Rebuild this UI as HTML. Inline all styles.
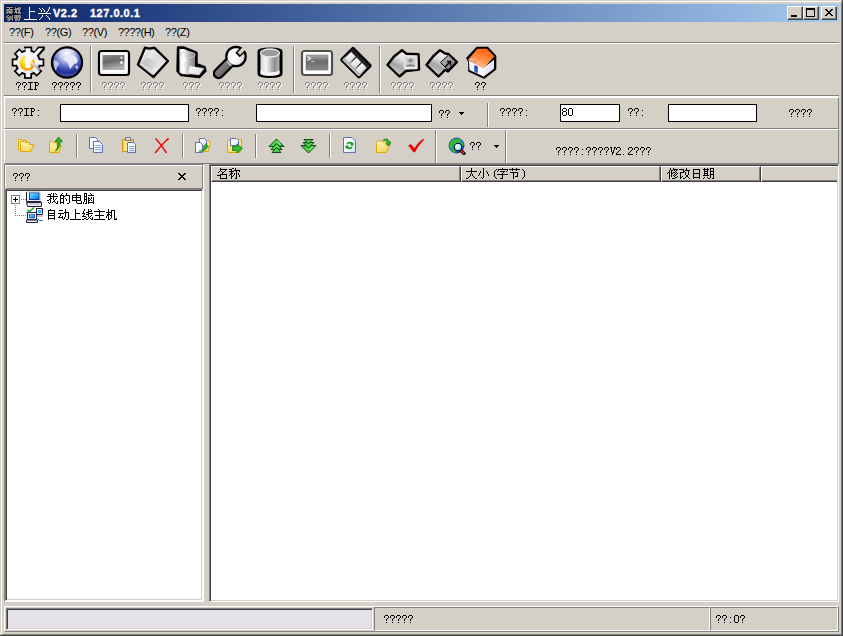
<!DOCTYPE html>
<html><head><meta charset="utf-8">
<style>
*{margin:0;padding:0;box-sizing:border-box}
html,body{width:843px;height:636px;overflow:hidden;background:#d4d0c8;font-family:"Liberation Sans",sans-serif;font-size:11px;color:#000}
.a{position:absolute}
.t{position:absolute;white-space:pre;line-height:1}
.mono{font-family:"Liberation Mono",monospace;font-size:11px;letter-spacing:-0.6px}
.gl{background:#808080}
.wl{background:#fff}
.dl{background:#404040}
.cjk{font-size:12px}
.dis{color:#808080;text-shadow:1px 1px 0 #fff}
</style></head><body>
<!-- window frame -->
<div class="a" style="left:0;top:0;width:843px;height:636px;border-right:1px solid #404040;border-bottom:1px solid #404040"></div>
<div class="a" style="left:1px;top:1px;width:841px;height:634px;border-left:1px solid #fff;border-top:1px solid #fff;border-right:1px solid #808080;border-bottom:1px solid #808080"></div>

<!-- title bar -->
<div class="a" style="left:4px;top:4px;width:835px;height:18px;background:linear-gradient(to right,#0a246a,#a6caf0)"></div>
<svg class="a" style="left:6px;top:5px" width="16" height="16" shape-rendering="crispEdges"><rect x="0" y="1" width="1" height="1" fill="#000" fill-opacity="0.48"/><rect x="1" y="1" width="1" height="1" fill="#000" fill-opacity="0.48"/><rect x="2" y="1" width="1" height="1" fill="#000" fill-opacity="0.78"/><rect x="3" y="1" width="1" height="1" fill="#000" fill-opacity="0.78"/><rect x="4" y="1" width="1" height="1" fill="#000" fill-opacity="0.78"/><rect x="5" y="1" width="1" height="1" fill="#000" fill-opacity="0.48"/><rect x="6" y="1" width="1" height="1" fill="#000" fill-opacity="0.48"/><rect x="8" y="1" width="1" height="1" fill="#000" fill-opacity="0.44"/><rect x="9" y="1" width="1" height="1" fill="#000" fill-opacity="0.44"/><rect x="10" y="1" width="1" height="1" fill="#000" fill-opacity="0.44"/><rect x="11" y="1" width="1" height="1" fill="#000" fill-opacity="0.33"/><rect x="12" y="1" width="1" height="1" fill="#000" fill-opacity="0.45"/><rect x="13" y="1" width="1" height="1" fill="#000" fill-opacity="0.45"/><rect x="14" y="1" width="1" height="1" fill="#000" fill-opacity="0.45"/><rect x="0" y="2" width="1" height="1" fill="rgb(117,117,117)"/><rect x="1" y="2" width="1" height="1" fill="rgb(142,142,142)"/><rect x="2" y="2" width="1" height="1" fill="rgb(142,142,142)"/><rect x="3" y="2" width="1" height="1" fill="rgb(181,181,181)"/><rect x="4" y="2" width="1" height="1" fill="rgb(142,142,142)"/><rect x="5" y="2" width="1" height="1" fill="rgb(142,142,142)"/><rect x="6" y="2" width="1" height="1" fill="rgb(116,116,116)"/><rect x="8" y="2" width="1" height="1" fill="#000" fill-opacity="0.58"/><rect x="9" y="2" width="1" height="1" fill="rgb(137,137,137)"/><rect x="10" y="2" width="1" height="1" fill="#000" fill-opacity="0.58"/><rect x="11" y="2" width="1" height="1" fill="#000" fill-opacity="0.64"/><rect x="12" y="2" width="1" height="1" fill="rgb(122,122,122)"/><rect x="13" y="2" width="1" height="1" fill="rgb(138,138,138)"/><rect x="14" y="2" width="1" height="1" fill="rgb(102,102,102)"/><rect x="15" y="2" width="1" height="1" fill="#000" fill-opacity="0.33"/><rect x="0" y="3" width="1" height="1" fill="#000" fill-opacity="0.65"/><rect x="1" y="3" width="1" height="1" fill="#000" fill-opacity="0.65"/><rect x="2" y="3" width="1" height="1" fill="#000" fill-opacity="0.78"/><rect x="3" y="3" width="1" height="1" fill="rgb(154,154,154)"/><rect x="4" y="3" width="1" height="1" fill="#000" fill-opacity="0.78"/><rect x="5" y="3" width="1" height="1" fill="#000" fill-opacity="0.65"/><rect x="6" y="3" width="1" height="1" fill="#000" fill-opacity="0.65"/><rect x="8" y="3" width="1" height="1" fill="#000" fill-opacity="0.65"/><rect x="9" y="3" width="1" height="1" fill="rgb(155,155,155)"/><rect x="10" y="3" width="1" height="1" fill="rgb(143,143,143)"/><rect x="11" y="3" width="1" height="1" fill="rgb(147,147,147)"/><rect x="12" y="3" width="1" height="1" fill="rgb(163,163,163)"/><rect x="13" y="3" width="1" height="1" fill="rgb(158,158,158)"/><rect x="14" y="3" width="1" height="1" fill="rgb(123,123,123)"/><rect x="15" y="3" width="1" height="1" fill="#000" fill-opacity="0.33"/><rect x="0" y="4" width="1" height="1" fill="rgb(106,106,106)"/><rect x="1" y="4" width="1" height="1" fill="rgb(165,165,165)"/><rect x="2" y="4" width="1" height="1" fill="rgb(159,159,159)"/><rect x="3" y="4" width="1" height="1" fill="rgb(142,142,142)"/><rect x="4" y="4" width="1" height="1" fill="rgb(162,162,162)"/><rect x="5" y="4" width="1" height="1" fill="rgb(165,165,165)"/><rect x="6" y="4" width="1" height="1" fill="rgb(108,108,108)"/><rect x="8" y="4" width="1" height="1" fill="rgb(106,106,106)"/><rect x="9" y="4" width="1" height="1" fill="rgb(164,164,164)"/><rect x="10" y="4" width="1" height="1" fill="rgb(147,147,147)"/><rect x="11" y="4" width="1" height="1" fill="rgb(140,140,140)"/><rect x="12" y="4" width="1" height="1" fill="rgb(132,132,132)"/><rect x="13" y="4" width="1" height="1" fill="rgb(116,116,116)"/><rect x="14" y="4" width="1" height="1" fill="rgb(113,113,113)"/><rect x="15" y="4" width="1" height="1" fill="#000" fill-opacity="0.33"/><rect x="0" y="5" width="1" height="1" fill="rgb(106,106,106)"/><rect x="1" y="5" width="1" height="1" fill="rgb(122,122,122)"/><rect x="2" y="5" width="1" height="1" fill="rgb(138,138,138)"/><rect x="3" y="5" width="1" height="1" fill="#000" fill-opacity="0.72"/><rect x="4" y="5" width="1" height="1" fill="rgb(140,140,140)"/><rect x="5" y="5" width="1" height="1" fill="rgb(122,122,122)"/><rect x="6" y="5" width="1" height="1" fill="rgb(108,108,108)"/><rect x="8" y="5" width="1" height="1" fill="#000" fill-opacity="0.67"/><rect x="9" y="5" width="1" height="1" fill="rgb(142,142,142)"/><rect x="10" y="5" width="1" height="1" fill="rgb(139,139,139)"/><rect x="11" y="5" width="1" height="1" fill="#000" fill-opacity="0.66"/><rect x="12" y="5" width="1" height="1" fill="rgb(148,148,148)"/><rect x="13" y="5" width="1" height="1" fill="rgb(166,166,166)"/><rect x="14" y="5" width="1" height="1" fill="#000" fill-opacity="0.73"/><rect x="0" y="6" width="1" height="1" fill="rgb(106,106,106)"/><rect x="1" y="6" width="1" height="1" fill="rgb(130,130,130)"/><rect x="2" y="6" width="1" height="1" fill="rgb(136,136,136)"/><rect x="3" y="6" width="1" height="1" fill="rgb(173,173,173)"/><rect x="4" y="6" width="1" height="1" fill="rgb(136,136,136)"/><rect x="5" y="6" width="1" height="1" fill="rgb(132,132,132)"/><rect x="6" y="6" width="1" height="1" fill="rgb(108,108,108)"/><rect x="7" y="6" width="1" height="1" fill="#000" fill-opacity="0.44"/><rect x="8" y="6" width="1" height="1" fill="#000" fill-opacity="0.67"/><rect x="9" y="6" width="1" height="1" fill="rgb(167,167,167)"/><rect x="10" y="6" width="1" height="1" fill="rgb(165,165,165)"/><rect x="11" y="6" width="1" height="1" fill="#000" fill-opacity="0.66"/><rect x="12" y="6" width="1" height="1" fill="rgb(124,124,124)"/><rect x="13" y="6" width="1" height="1" fill="rgb(174,174,174)"/><rect x="14" y="6" width="1" height="1" fill="#000" fill-opacity="0.73"/><rect x="15" y="6" width="1" height="1" fill="#000" fill-opacity="0.39"/><rect x="0" y="7" width="1" height="1" fill="rgb(106,106,106)"/><rect x="1" y="7" width="1" height="1" fill="rgb(140,140,140)"/><rect x="2" y="7" width="1" height="1" fill="rgb(138,138,138)"/><rect x="3" y="7" width="1" height="1" fill="rgb(174,174,174)"/><rect x="4" y="7" width="1" height="1" fill="rgb(138,138,138)"/><rect x="5" y="7" width="1" height="1" fill="rgb(140,140,140)"/><rect x="6" y="7" width="1" height="1" fill="rgb(108,108,108)"/><rect x="7" y="7" width="1" height="1" fill="#000" fill-opacity="0.44"/><rect x="8" y="7" width="1" height="1" fill="rgb(137,137,137)"/><rect x="9" y="7" width="1" height="1" fill="rgb(122,122,122)"/><rect x="10" y="7" width="1" height="1" fill="rgb(151,151,151)"/><rect x="11" y="7" width="1" height="1" fill="rgb(125,125,125)"/><rect x="12" y="7" width="1" height="1" fill="rgb(144,144,144)"/><rect x="13" y="7" width="1" height="1" fill="rgb(157,157,157)"/><rect x="14" y="7" width="1" height="1" fill="rgb(130,130,130)"/><rect x="15" y="7" width="1" height="1" fill="#000" fill-opacity="0.43"/><rect x="0" y="8" width="1" height="1" fill="rgb(106,106,106)"/><rect x="1" y="8" width="1" height="1" fill="rgb(122,122,122)"/><rect x="2" y="8" width="1" height="1" fill="#000" fill-opacity="0.73"/><rect x="3" y="8" width="1" height="1" fill="rgb(144,144,144)"/><rect x="4" y="8" width="1" height="1" fill="rgb(102,102,102)"/><rect x="5" y="8" width="1" height="1" fill="rgb(159,159,159)"/><rect x="6" y="8" width="1" height="1" fill="#000" fill-opacity="0.61"/><rect x="7" y="8" width="1" height="1" fill="#000" fill-opacity="0.44"/><rect x="8" y="8" width="1" height="1" fill="#000" fill-opacity="0.44"/><rect x="9" y="8" width="1" height="1" fill="#000" fill-opacity="0.55"/><rect x="10" y="8" width="1" height="1" fill="rgb(132,132,132)"/><rect x="11" y="8" width="1" height="1" fill="#000" fill-opacity="0.55"/><rect x="12" y="8" width="1" height="1" fill="rgb(149,149,149)"/><rect x="13" y="8" width="1" height="1" fill="rgb(129,129,129)"/><rect x="14" y="8" width="1" height="1" fill="rgb(136,136,136)"/><rect x="15" y="8" width="1" height="1" fill="#000" fill-opacity="0.43"/><rect x="0" y="9" width="1" height="1" fill="#000" fill-opacity="0.33"/><rect x="1" y="9" width="1" height="1" fill="#000" fill-opacity="0.66"/><rect x="2" y="9" width="1" height="1" fill="#000" fill-opacity="0.66"/><rect x="3" y="9" width="1" height="1" fill="#000" fill-opacity="0.66"/><rect x="4" y="9" width="1" height="1" fill="#000" fill-opacity="0.61"/><rect x="5" y="9" width="1" height="1" fill="#000" fill-opacity="0.61"/><rect x="6" y="9" width="1" height="1" fill="#000" fill-opacity="0.61"/><rect x="7" y="9" width="1" height="1" fill="#000" fill-opacity="0.44"/><rect x="8" y="9" width="1" height="1" fill="#000" fill-opacity="0.53"/><rect x="9" y="9" width="1" height="1" fill="#000" fill-opacity="0.67"/><rect x="10" y="9" width="1" height="1" fill="#000" fill-opacity="0.67"/><rect x="11" y="9" width="1" height="1" fill="#000" fill-opacity="0.67"/><rect x="12" y="9" width="1" height="1" fill="#000" fill-opacity="0.58"/><rect x="13" y="9" width="1" height="1" fill="#000" fill-opacity="0.58"/><rect x="14" y="9" width="1" height="1" fill="#000" fill-opacity="0.58"/><rect x="15" y="9" width="1" height="1" fill="#000" fill-opacity="0.43"/><rect x="0" y="10" width="1" height="1" fill="#000" fill-opacity="0.40"/><rect x="1" y="10" width="1" height="1" fill="rgb(116,116,116)"/><rect x="2" y="10" width="1" height="1" fill="rgb(165,165,165)"/><rect x="3" y="10" width="1" height="1" fill="#000" fill-opacity="0.66"/><rect x="4" y="10" width="1" height="1" fill="#000" fill-opacity="0.56"/><rect x="5" y="10" width="1" height="1" fill="#000" fill-opacity="0.44"/><rect x="6" y="10" width="1" height="1" fill="rgb(136,136,136)"/><rect x="7" y="10" width="1" height="1" fill="#000" fill-opacity="0.44"/><rect x="8" y="10" width="1" height="1" fill="rgb(120,120,120)"/><rect x="9" y="10" width="1" height="1" fill="rgb(149,149,149)"/><rect x="10" y="10" width="1" height="1" fill="rgb(167,167,167)"/><rect x="11" y="10" width="1" height="1" fill="rgb(130,130,130)"/><rect x="12" y="10" width="1" height="1" fill="rgb(143,143,143)"/><rect x="13" y="10" width="1" height="1" fill="rgb(154,154,154)"/><rect x="14" y="10" width="1" height="1" fill="rgb(114,114,114)"/><rect x="0" y="11" width="1" height="1" fill="rgb(104,104,104)"/><rect x="1" y="11" width="1" height="1" fill="rgb(131,131,131)"/><rect x="2" y="11" width="1" height="1" fill="#000" fill-opacity="0.66"/><rect x="3" y="11" width="1" height="1" fill="rgb(152,152,152)"/><rect x="4" y="11" width="1" height="1" fill="rgb(128,128,128)"/><rect x="5" y="11" width="1" height="1" fill="rgb(106,106,106)"/><rect x="6" y="11" width="1" height="1" fill="rgb(136,136,136)"/><rect x="7" y="11" width="1" height="1" fill="#000" fill-opacity="0.44"/><rect x="8" y="11" width="1" height="1" fill="rgb(120,120,120)"/><rect x="9" y="11" width="1" height="1" fill="rgb(146,146,146)"/><rect x="10" y="11" width="1" height="1" fill="rgb(166,166,166)"/><rect x="11" y="11" width="1" height="1" fill="rgb(130,130,130)"/><rect x="12" y="11" width="1" height="1" fill="rgb(140,140,140)"/><rect x="13" y="11" width="1" height="1" fill="rgb(151,151,151)"/><rect x="14" y="11" width="1" height="1" fill="rgb(114,114,114)"/><rect x="0" y="12" width="1" height="1" fill="rgb(119,119,119)"/><rect x="1" y="12" width="1" height="1" fill="rgb(129,129,129)"/><rect x="2" y="12" width="1" height="1" fill="rgb(140,140,140)"/><rect x="3" y="12" width="1" height="1" fill="rgb(118,118,118)"/><rect x="4" y="12" width="1" height="1" fill="rgb(125,125,125)"/><rect x="5" y="12" width="1" height="1" fill="rgb(106,106,106)"/><rect x="6" y="12" width="1" height="1" fill="rgb(136,136,136)"/><rect x="7" y="12" width="1" height="1" fill="#000" fill-opacity="0.44"/><rect x="8" y="12" width="1" height="1" fill="rgb(120,120,120)"/><rect x="9" y="12" width="1" height="1" fill="rgb(101,101,101)"/><rect x="10" y="12" width="1" height="1" fill="rgb(142,142,142)"/><rect x="11" y="12" width="1" height="1" fill="rgb(140,140,140)"/><rect x="12" y="12" width="1" height="1" fill="rgb(136,136,136)"/><rect x="13" y="12" width="1" height="1" fill="rgb(150,150,150)"/><rect x="14" y="12" width="1" height="1" fill="rgb(114,114,114)"/><rect x="0" y="13" width="1" height="1" fill="rgb(100,100,100)"/><rect x="1" y="13" width="1" height="1" fill="#000" fill-opacity="0.47"/><rect x="2" y="13" width="1" height="1" fill="rgb(129,129,129)"/><rect x="3" y="13" width="1" height="1" fill="rgb(137,137,137)"/><rect x="4" y="13" width="1" height="1" fill="rgb(116,116,116)"/><rect x="5" y="13" width="1" height="1" fill="rgb(106,106,106)"/><rect x="6" y="13" width="1" height="1" fill="rgb(136,136,136)"/><rect x="7" y="13" width="1" height="1" fill="#000" fill-opacity="0.44"/><rect x="8" y="13" width="1" height="1" fill="rgb(114,114,114)"/><rect x="9" y="13" width="1" height="1" fill="rgb(144,144,144)"/><rect x="10" y="13" width="1" height="1" fill="rgb(135,135,135)"/><rect x="11" y="13" width="1" height="1" fill="rgb(153,153,153)"/><rect x="12" y="13" width="1" height="1" fill="#000" fill-opacity="0.57"/><rect x="13" y="13" width="1" height="1" fill="rgb(151,151,151)"/><rect x="14" y="13" width="1" height="1" fill="rgb(103,103,103)"/><rect x="0" y="14" width="1" height="1" fill="#000" fill-opacity="0.39"/><rect x="1" y="14" width="1" height="1" fill="rgb(130,130,130)"/><rect x="2" y="14" width="1" height="1" fill="rgb(139,139,139)"/><rect x="3" y="14" width="1" height="1" fill="rgb(137,137,137)"/><rect x="4" y="14" width="1" height="1" fill="rgb(116,116,116)"/><rect x="5" y="14" width="1" height="1" fill="rgb(106,106,106)"/><rect x="6" y="14" width="1" height="1" fill="rgb(136,136,136)"/><rect x="7" y="14" width="1" height="1" fill="#000" fill-opacity="0.44"/><rect x="8" y="14" width="1" height="1" fill="#000" fill-opacity="0.50"/><rect x="9" y="14" width="1" height="1" fill="rgb(128,128,128)"/><rect x="10" y="14" width="1" height="1" fill="rgb(134,134,134)"/><rect x="11" y="14" width="1" height="1" fill="rgb(136,136,136)"/><rect x="12" y="14" width="1" height="1" fill="rgb(134,134,134)"/><rect x="13" y="14" width="1" height="1" fill="rgb(129,129,129)"/><rect x="14" y="14" width="1" height="1" fill="#000" fill-opacity="0.55"/><rect x="0" y="15" width="1" height="1" fill="#000" fill-opacity="0.39"/><rect x="1" y="15" width="1" height="1" fill="rgb(101,101,101)"/><rect x="2" y="15" width="1" height="1" fill="rgb(123,123,123)"/><rect x="3" y="15" width="1" height="1" fill="rgb(154,154,154)"/><rect x="4" y="15" width="1" height="1" fill="#000" fill-opacity="0.58"/><rect x="5" y="15" width="1" height="1" fill="#000" fill-opacity="0.44"/><rect x="6" y="15" width="1" height="1" fill="rgb(136,136,136)"/><rect x="7" y="15" width="1" height="1" fill="#000" fill-opacity="0.44"/><rect x="8" y="15" width="1" height="1" fill="#000" fill-opacity="0.48"/><rect x="9" y="15" width="1" height="1" fill="rgb(142,142,142)"/><rect x="10" y="15" width="1" height="1" fill="rgb(140,140,140)"/><rect x="11" y="15" width="1" height="1" fill="#000" fill-opacity="0.47"/><rect x="12" y="15" width="1" height="1" fill="rgb(138,138,138)"/><rect x="13" y="15" width="1" height="1" fill="rgb(146,146,146)"/><rect x="14" y="15" width="1" height="1" fill="#000" fill-opacity="0.51"/></svg>
<svg class="a" style="left:24px;top:7px" width="27" height="13" shape-rendering="crispEdges"><path d="M5 0h1v1h-1zM25 0h1v1h-1zM5 1h1v1h-1zM15 1h1v1h-1zM18 1h1v1h-1zM25 1h1v1h-1zM5 2h1v1h-1zM16 2h1v1h-1zM19 2h1v1h-1zM24 2h1v1h-1zM5 3h1v1h-1zM17 3h1v1h-1zM20 3h1v1h-1zM24 3h1v1h-1zM5 4h6v1h-6zM17 4h1v1h-1zM20 4h1v1h-1zM23 4h1v1h-1zM5 5h1v1h-1zM22 5h1v1h-1zM5 6h1v1h-1zM14 6h13v1h-13zM5 7h1v1h-1zM5 8h1v1h-1zM18 8h1v1h-1zM22 8h1v1h-1zM5 9h1v1h-1zM18 9h1v1h-1zM23 9h1v1h-1zM5 10h1v1h-1zM17 10h1v1h-1zM24 10h1v1h-1zM5 11h1v1h-1zM16 11h1v1h-1zM25 11h1v1h-1zM0 12h13v1h-13zM15 12h1v1h-1zM25 12h1v1h-1z" fill="#fff"/></svg>
<div class="t" style="left:53px;top:8px;color:#fff;font-weight:bold;font-size:11px;letter-spacing:0.5px;-webkit-text-stroke:0.35px #fff">V2.2</div>
<div class="t" style="left:90px;top:8px;color:#fff;font-weight:bold;font-size:11px;letter-spacing:0.5px;-webkit-text-stroke:0.35px #fff">127.0.0.1</div>

<!-- title buttons -->
<div class="a" style="left:787px;top:6px;width:16px;height:14px;background:#d4d0c8;border-top:1px solid #fff;border-left:1px solid #fff;border-right:1px solid #404040;border-bottom:1px solid #404040;box-shadow:inset -1px -1px 0 #808080"></div>
<div class="a" style="left:803px;top:6px;width:16px;height:14px;background:#d4d0c8;border-top:1px solid #fff;border-left:1px solid #fff;border-right:1px solid #404040;border-bottom:1px solid #404040;box-shadow:inset -1px -1px 0 #808080"></div>
<div class="a" style="left:821px;top:6px;width:16px;height:14px;background:#d4d0c8;border-top:1px solid #fff;border-left:1px solid #fff;border-right:1px solid #404040;border-bottom:1px solid #404040;box-shadow:inset -1px -1px 0 #808080"></div>
<div class="a" style="left:791px;top:15px;width:6px;height:2px;background:#000"></div>
<div class="a" style="left:806px;top:8px;width:9px;height:9px;border:1px solid #000;border-top-width:2px"></div>
<svg class="a" style="left:821px;top:6px" width="16" height="14"><path d="M4 3h2v1h-2zM10 3h2v1h-2zM5 4h2v1h-2zM9 4h2v1h-2zM6 5h4v1h-4zM7 6h2v1h-2zM6 7h4v1h-4zM5 8h2v1h-2zM9 8h2v1h-2zM4 9h2v1h-2zM10 9h2v1h-2z" fill="#000" shape-rendering="crispEdges"/></svg>

<!-- menu -->
<div class="t" style="left:9px;top:27px;letter-spacing:-0.35px">??(F)</div>
<div class="t" style="left:45px;top:27px;letter-spacing:-0.35px">??(G)</div>
<div class="t" style="left:82px;top:27px;letter-spacing:-0.35px">??(V)</div>
<div class="t" style="left:118px;top:27px;letter-spacing:-0.5px">????(H)</div>
<div class="t" style="left:165px;top:27px;letter-spacing:-0.35px">??(Z)</div>
<div class="a gl" style="left:4px;top:42px;width:835px;height:1px"></div>
<div class="a wl" style="left:4px;top:43px;width:835px;height:1px"></div>

<!-- rebar row 1 : big toolbar -->
<!-- big toolbar icons -->
<svg class="a" style="left:10px;top:44px" width="36" height="36" viewBox="0 0 36 36">
 <defs><radialGradient id="ky" cx="0.4" cy="0.3" r="0.75"><stop offset="0" stop-color="#fff6b0"/><stop offset="0.45" stop-color="#ffd200"/><stop offset="1" stop-color="#f09000"/></radialGradient>
 <linearGradient id="kg" x1="0" y1="0" x2="1" y2="1"><stop offset="0" stop-color="#fff"/><stop offset="0.6" stop-color="#eeeef2"/><stop offset="1" stop-color="#b0b0bc"/></linearGradient>
 <linearGradient id="kl" x1="0" y1="0" x2="1" y2="1"><stop offset="0" stop-color="#f0f0f4"/><stop offset="1" stop-color="#9898a8"/></linearGradient></defs>
 <g transform="translate(18 18.5)" fill="#000">
   <circle r="13"/>
   <rect x="-4" y="-16.3" width="8" height="16.3" transform="rotate(90)"/>
   <rect x="-4" y="-16.3" width="8" height="16.3" transform="rotate(135)"/>
   <rect x="-4" y="-16.3" width="8" height="16.3" transform="rotate(180)"/>
   <rect x="-4" y="-16.3" width="8" height="16.3" transform="rotate(225)"/>
   <rect x="-4" y="-16.3" width="8" height="16.3" transform="rotate(270)"/>
   <rect x="-4" y="-16.3" width="8" height="16.3" transform="rotate(315)"/>
 </g>
 <path d="M13.8 2.5H22.2V10.5L28 2.5H34.8V5.5L25 16.5L20 18Z" fill="#000"/>
 <g transform="translate(18 18.5)" fill="url(#kg)">
   <circle r="11"/>
   <rect x="-2.3" y="-14.6" width="4.6" height="14.6" transform="rotate(90)"/>
   <rect x="-2.3" y="-14.6" width="4.6" height="14.6" transform="rotate(135)"/>
   <rect x="-2.3" y="-14.6" width="4.6" height="14.6" transform="rotate(180)"/>
   <rect x="-2.3" y="-14.6" width="4.6" height="14.6" transform="rotate(225)"/>
   <rect x="-2.3" y="-14.6" width="4.6" height="14.6" transform="rotate(270)"/>
   <rect x="-2.3" y="-14.6" width="4.6" height="14.6" transform="rotate(315)"/>
 </g>
 <circle cx="17.3" cy="19.2" r="7.6" fill="url(#ky)"/>
 <path d="M21 16.5L30.5 25L28.5 27L20.5 19Z" fill="url(#kl)"/>
 <path d="M15.5 4.2H20.5V12.8L28.8 4.2H33L23.5 15L20.5 17.5V24H15.5Z" fill="#f8f8fb"/>
</svg>
<svg class="a" style="left:49px;top:44px" width="36" height="36" viewBox="0 0 36 36">
 <defs><radialGradient id="gb" cx="0.5" cy="0.18" r="0.85"><stop offset="0" stop-color="#ffffff"/><stop offset="0.28" stop-color="#c4cbf0"/><stop offset="0.52" stop-color="#6676cc"/><stop offset="0.8" stop-color="#1e2e94"/><stop offset="1" stop-color="#5060c4"/></radialGradient></defs>
 <circle cx="18" cy="18.5" r="16.2" fill="#000"/>
 <circle cx="18" cy="18.5" r="14" fill="url(#gb)"/>
 <path d="M15 14 L19 10.5 L24 11 L27 13 L29 16 L28 19 L25 20 L22 24 L21 25 L19.5 21 L18 17.5 L15.5 17 Z" fill="#e4e8f8"/>
 <path d="M5 16 L8.5 17 L10.5 20 L8 23 L7 27 L5.5 24 L4.5 20Z" fill="#b8c0e8"/>
 <path d="M26 22 L28.5 21.5 L29.5 24 L27.5 25.5Z" fill="#b8c0e8"/>
</svg>
<svg class="a" style="left:96px;top:44px" width="36" height="36" viewBox="0 0 36 36">
 <defs><linearGradient id="mw" x1="0" y1="0" x2="0.3" y2="1"><stop offset="0" stop-color="#8a8a8a"/><stop offset="0.5" stop-color="#6a6a6a"/><stop offset="1" stop-color="#b0b0b0"/></linearGradient></defs>
 <rect x="3" y="7" width="30" height="24" rx="2.5" fill="#fff" stroke="#000" stroke-width="2.2"/>
 <rect x="5" y="9" width="26" height="20" rx="1" fill="none" stroke="#e8e8e8" stroke-width="1"/>
 <rect x="6.5" y="11" width="22" height="15" fill="url(#mw)"/>
 <circle cx="25.5" cy="13.8" r="1.2" fill="#ddd"/>
 <circle cx="25.5" cy="18.5" r="1.5" fill="#eee"/>
</svg>
<svg class="a" style="left:135px;top:44px" width="36" height="36" viewBox="0 0 36 36">
 <defs><linearGradient id="fl" x1="0" y1="0" x2="1" y2="1"><stop offset="0" stop-color="#fafafa"/><stop offset="0.5" stop-color="#dcdcdc"/><stop offset="1" stop-color="#f4f4f4"/></linearGradient>
 <linearGradient id="fl2" x1="0" y1="0" x2="1" y2="0"><stop offset="0" stop-color="#b8b8b8"/><stop offset="1" stop-color="#e0e0e0"/></linearGradient></defs>
 <path d="M10 3.8L14.5 4.6L19.5 3.8L33 17L18.5 33L3 20.5Z" fill="url(#fl)" stroke="#000" stroke-width="2.4" stroke-linejoin="round"/>
 <path d="M6.5 19.5L12 13.5L23 18L16.5 26Z" fill="url(#fl2)" opacity="0.9"/>
 <path d="M14.5 6L5 20.5" stroke="#c8c8c8" stroke-width="1"/>
 <path d="M5 21L17 30.5" stroke="#c0c0c0" stroke-width="0.8"/>
</svg>
<svg class="a" style="left:174px;top:44px" width="36" height="36" viewBox="0 0 36 36">
 <defs><linearGradient id="tr" x1="0" y1="0" x2="1" y2="0"><stop offset="0" stop-color="#e8e8e8"/><stop offset="0.25" stop-color="#ffffff"/><stop offset="0.6" stop-color="#b8b8b8"/><stop offset="1" stop-color="#808080"/></linearGradient>
 <linearGradient id="tp" x1="0" y1="0" x2="1" y2="1"><stop offset="0" stop-color="#ffffff"/><stop offset="1" stop-color="#d8d8d8"/></linearGradient></defs>
 <path d="M4 3.5L10 3.5L22.5 8.5L22.5 20L30.5 23L31.5 27L25.5 33L7 31L3.5 27Z" fill="#000" stroke="#000" stroke-width="2.4" stroke-linejoin="round"/>
 <path d="M5.5 5L10 5L21 9.5L21 28.5C19 31 8 31 5.5 28.5Z" fill="url(#tr)"/>
 <ellipse cx="13.5" cy="11" rx="7.5" ry="3" fill="none" stroke="#d0d0d0" stroke-width="1"/>
 <path d="M6 14C8 12 12 13 12 18" fill="none" stroke="#fff" stroke-width="1.5" opacity="0.8"/>
 <path d="M15.5 22L30 24.5L25 31L14 29.5Z" fill="url(#tp)" stroke="#c8c8c8" stroke-width="0.6"/>
</svg>
<svg class="a" style="left:213px;top:44px" width="36" height="36" viewBox="0 0 36 36">
 <defs><radialGradient id="wr" cx="0.35" cy="0.5" r="0.7"><stop offset="0" stop-color="#fff"/><stop offset="0.6" stop-color="#f2f2f2"/><stop offset="1" stop-color="#b8b8b8"/></radialGradient>
 <linearGradient id="wh" x1="0" y1="0" x2="1" y2="1"><stop offset="0" stop-color="#909090"/><stop offset="1" stop-color="#5a5a5a"/></linearGradient>
 <mask id="wn" maskUnits="userSpaceOnUse" x="0" y="0" width="36" height="36"><rect width="36" height="36" fill="#fff"/><rect x="-1.8" y="-20" width="3.6" height="16" fill="#000" transform="translate(23 12.5) rotate(45)"/></mask>
 <mask id="wn2" maskUnits="userSpaceOnUse" x="0" y="0" width="36" height="36"><rect width="36" height="36" fill="#fff"/><rect x="-3.1" y="-20" width="6.2" height="17.8" fill="#000" transform="translate(23 12.5) rotate(45)"/></mask></defs>
 <path d="M5.5 29.5L17 18" stroke="#000" stroke-width="11.5" stroke-linecap="round"/>
 <circle cx="23" cy="12.5" r="10.8" fill="#000" mask="url(#wn)"/>
 <path d="M5.7 29.3L17 18" stroke="url(#wh)" stroke-width="7" stroke-linecap="round"/>
 <circle cx="23" cy="12.5" r="8.6" fill="url(#wr)" mask="url(#wn2)"/>
 <path d="M14.2 17.8L18.2 21.8" stroke="#d0d0d0" stroke-width="1.2"/>
</svg>
<svg class="a" style="left:252px;top:44px" width="36" height="36" viewBox="0 0 36 36">
 <defs><linearGradient id="cy" x1="0" y1="0" x2="1" y2="0"><stop offset="0" stop-color="#d8d8d8"/><stop offset="0.3" stop-color="#f4f4f4"/><stop offset="0.75" stop-color="#8c8c8c"/><stop offset="1" stop-color="#b8b8b8"/></linearGradient></defs>
 <path d="M6.5 7C6.5 3.5 29.5 3.5 29.5 7V30C29.5 34 6.5 34 6.5 30Z" fill="#000" stroke="#000" stroke-width="2"/>
 <path d="M8.5 8.5V29.5C8.5 32.5 27.5 32.5 27.5 29.5V8.5Z" fill="url(#cy)"/>
 <ellipse cx="18" cy="9" rx="9.5" ry="4" fill="#9a9a9a" stroke="#e8e8e8" stroke-width="1.3"/>
 <path d="M8.5 26C10 29 26 29 27.5 26V29.5C26 32.5 10 32.5 8.5 29.5Z" fill="#f4f4f4"/>
</svg>
<svg class="a" style="left:299px;top:44px" width="36" height="36" viewBox="0 0 36 36">
 <defs><linearGradient id="tm" x1="0" y1="0" x2="0" y2="1"><stop offset="0" stop-color="#b0b0b0"/><stop offset="0.4" stop-color="#6a6a6a"/><stop offset="1" stop-color="#8a8a8a"/></linearGradient></defs>
 <rect x="3" y="7" width="30" height="24" rx="2.5" fill="#fff" stroke="#505050" stroke-width="2.2"/>
 <rect x="7" y="11" width="22" height="15" fill="url(#tm)" stroke="#707070" stroke-width="0.6"/>
 <path d="M8.5 12.5L11.5 14.5L8.5 16.5" fill="none" stroke="#eee" stroke-width="1.3"/>
 <rect x="12" y="17" width="3.5" height="1" fill="#ccc"/>
</svg>
<svg class="a" style="left:338px;top:44px" width="36" height="36" viewBox="0 0 36 36">
 <defs><linearGradient id="fm" x1="0" y1="0" x2="0" y2="1"><stop offset="0" stop-color="#181818"/><stop offset="0.5" stop-color="#404040"/><stop offset="0.75" stop-color="#909090"/><stop offset="1" stop-color="#d0d0d0"/></linearGradient>
 <linearGradient id="fq" x1="0" y1="0" x2="1" y2="1"><stop offset="0" stop-color="#fcfcfc"/><stop offset="1" stop-color="#d8d8d8"/></linearGradient></defs>
 <g transform="translate(18 18.7) rotate(45)">
  <rect x="-13.8" y="-9.6" width="27.6" height="19.2" rx="2" fill="#000"/>
  <rect x="-12" y="-7.8" width="24" height="15.6" rx="1" fill="url(#fm)"/>
  <rect x="-11" y="-4" width="6.4" height="9" fill="url(#fq)"/>
  <rect x="-3.2" y="-4" width="6.4" height="9" fill="url(#fq)"/>
  <rect x="4.6" y="-4" width="6.4" height="9" fill="url(#fq)"/>
 </g>
</svg>
<svg class="a" style="left:385px;top:44px" width="36" height="36" viewBox="0 0 36 36">
 <defs><linearGradient id="c1" x1="0.8" y1="0" x2="0.2" y2="1"><stop offset="0" stop-color="#ffffff"/><stop offset="0.4" stop-color="#e0e0e0"/><stop offset="0.65" stop-color="#a4a4a4"/><stop offset="0.85" stop-color="#c8c8c8"/><stop offset="1" stop-color="#f8f8f8"/></linearGradient></defs>
 <path d="M17 6.2L21.5 9.8L33.5 10.2L34 25.5L21 27L14.5 32.5L2.5 21L9 12.5Z" fill="url(#c1)" stroke="#000" stroke-width="2.4" stroke-linejoin="round"/>
 <rect x="19" y="12" width="13" height="13" fill="#f2f2f2" stroke="#d0d0d0" stroke-width="0.8"/>
 <rect x="20.5" y="13.5" width="10" height="9.5" fill="#c8c8c8"/>
 <circle cx="25.5" cy="16.5" r="2" fill="#888"/>
 <path d="M21 22.5C21 19.5 30 19.5 30 22.5Z" fill="#888"/>
</svg>
<svg class="a" style="left:424px;top:44px" width="36" height="36" viewBox="0 0 36 36">
 <defs><linearGradient id="c2" x1="0.8" y1="0" x2="0.2" y2="1"><stop offset="0" stop-color="#ffffff"/><stop offset="0.4" stop-color="#e0e0e0"/><stop offset="0.65" stop-color="#a4a4a4"/><stop offset="0.85" stop-color="#c8c8c8"/><stop offset="1" stop-color="#f8f8f8"/></linearGradient>
 <linearGradient id="c3" x1="0" y1="0" x2="1" y2="1"><stop offset="0" stop-color="#d0d0d0"/><stop offset="1" stop-color="#606060"/></linearGradient></defs>
 <path d="M16 6.2L21 9.5L24.5 10L33 18L24 27.5L21 26L14.5 32.5L2.5 21L9 12.5Z" fill="url(#c2)" stroke="#000" stroke-width="2.4" stroke-linejoin="round"/>
 <path d="M24.5 11L32 18L24 26L16.5 18.5Z" fill="url(#c3)" stroke="#000" stroke-width="1"/>
 <path d="M21 23L26 18M23 17.5H26.5V21.5" fill="none" stroke="#000" stroke-width="1.3"/>
</svg>
<svg class="a" style="left:463px;top:44px" width="36" height="36" viewBox="0 0 36 36">
 <defs><linearGradient id="rf" x1="0.7" y1="0" x2="0.3" y2="1"><stop offset="0" stop-color="#ff6000"/><stop offset="0.55" stop-color="#ff9048"/><stop offset="1" stop-color="#ffc8a8"/></linearGradient>
 <linearGradient id="dr" x1="0" y1="0" x2="0" y2="1"><stop offset="0" stop-color="#202890"/><stop offset="1" stop-color="#4070e0"/></linearGradient>
 <linearGradient id="rw" x1="0" y1="0" x2="1" y2="1"><stop offset="0" stop-color="#ffffff"/><stop offset="1" stop-color="#d4d4f0"/></linearGradient></defs>
 <path d="M14 3.5H24.5L32.5 12V25L21 34L6 27V17.5L4 14Z" fill="#000" stroke="#000" stroke-width="1.6" stroke-linejoin="round"/>
 <path d="M6 16.5L20.5 24L31 16V24.5L20.5 32.5L6.5 26Z" fill="#f8f8ff"/>
 <path d="M20.5 24V32.5L31 24.5V16Z" fill="url(#rw)"/>
 <path d="M14.3 4.7H24L31.3 12.3L20.5 24.8L5.2 15.8Z" fill="url(#rf)"/>
 <path d="M5.5 16.2L13 14.5L20.5 24.5" fill="none" stroke="#ffc0a0" stroke-width="0.9"/>
 <path d="M11.3 21L14.8 22.7V29.5L11.3 27.8Z" fill="url(#dr)"/>
</svg>
<!-- big toolbar labels -->
<!-- separators -->
<div class="a gl" style="left:90px;top:46px;width:1px;height:47px"></div>
<div class="a wl" style="left:91px;top:46px;width:1px;height:47px"></div>
<div class="a gl" style="left:293px;top:46px;width:1px;height:47px"></div>
<div class="a wl" style="left:294px;top:46px;width:1px;height:47px"></div>
<div class="a gl" style="left:379px;top:46px;width:1px;height:47px"></div>
<div class="a wl" style="left:380px;top:46px;width:1px;height:47px"></div>


<!-- rebar row separators -->
<div class="a gl" style="left:4px;top:95px;width:835px;height:1px"></div>
<div class="a wl" style="left:4px;top:96px;width:835px;height:1px"></div>
<div class="a" style="left:4px;top:97px;width:835px;height:32px;border-top:1px solid #fff;border-left:1px solid #fff;border-right:1px solid #808080;border-bottom:1px solid #808080"></div>
<div class="a" style="left:4px;top:129px;width:835px;height:35px;border-top:1px solid #fff;border-left:1px solid #fff;border-right:1px solid #808080;border-bottom:1px solid #808080"></div>

<!-- address row -->
<div class="a" style="left:60px;top:104px;width:129px;height:18px;background:#fff;border:1px solid #000"></div>
<div class="a" style="left:256px;top:104px;width:176px;height:18px;background:#fff;border:1px solid #000"></div>
<svg class="a" style="left:459px;top:112px" width="5" height="3"><path d="M0 0h5v1h-5zM1 1h3v1h-3zM2 2h1v1h-1z" fill="#000" shape-rendering="crispEdges"/></svg>
<div class="a gl" style="left:487px;top:103px;width:1px;height:24px"></div>
<div class="a wl" style="left:488px;top:103px;width:1px;height:24px"></div>
<div class="a" style="left:560px;top:104px;width:60px;height:18px;background:#fff;border:1px solid #000"></div>
<div class="a" style="left:668px;top:104px;width:89px;height:18px;background:#fff;border:1px solid #000"></div>

<!-- small toolbar row -->
<!-- small toolbar -->
<svg class="a" style="left:17px;top:137px" width="18" height="17" viewBox="0 0 18 17">
 <defs><linearGradient id="fy" x1="0" y1="0" x2="0.4" y2="1"><stop offset="0" stop-color="#fff6c8"/><stop offset="1" stop-color="#f6d860"/></linearGradient></defs>
 <path d="M1.5 2.5H5L6 3.5H9.5V12.5H1.5Z" fill="#fbe9a0" stroke="#e0a800" stroke-width="1"/>
 <path d="M3.5 4.5H7L8 5.5H12.5V7.5H16.5L14 14.5H3.5Z" fill="url(#fy)" stroke="#e0a800" stroke-width="1" stroke-linejoin="round"/>
</svg>
<svg class="a" style="left:47px;top:136px" width="18" height="18" viewBox="0 0 18 18">
 <path d="M2.5 5.5H5.5L6.5 6.5H10V9.5H14.5L12 16.5H2.5Z" fill="url(#fy)" stroke="#e0a800" stroke-width="1" stroke-linejoin="round"/>
 <path d="M8.5 15C11 12 11 8 10.5 5.5H8L11.5 1L15.5 5.5H13C13.5 9 12 13 8.5 15Z" fill="#30b030" stroke="#108010" stroke-width="0.8"/>
</svg>
<svg class="a" style="left:88px;top:136px" width="17" height="18" viewBox="0 0 17 18">
 <defs><linearGradient id="db" x1="0" y1="0" x2="1" y2="1"><stop offset="0" stop-color="#fff"/><stop offset="0.6" stop-color="#f0f6ff"/><stop offset="1" stop-color="#c0d8f8"/></linearGradient></defs>
 <path d="M1.5 1.5H7.5L9.5 3.5V12.5H1.5Z" fill="url(#db)" stroke="#6070b8" stroke-width="1"/>
 <path d="M5.5 5.5H11.5L14.5 8.5V16.5H5.5Z" fill="url(#db)" stroke="#6070b8" stroke-width="1"/>
 <path d="M7 9.5H13M7 11.5H13M7 13.5H13" stroke="#88a8e0" stroke-width="1"/>
</svg>
<svg class="a" style="left:121px;top:137px" width="17" height="17" viewBox="0 0 17 17">
 <defs><linearGradient id="cb" x1="0" y1="0" x2="1" y2="0"><stop offset="0" stop-color="#f4c840"/><stop offset="0.4" stop-color="#fff0b0"/><stop offset="1" stop-color="#e0b030"/></linearGradient></defs>
 <path d="M1.5 2.5H12.5V14.5H1.5Z" fill="url(#cb)" stroke="#c89810" stroke-width="1"/>
 <rect x="4.5" y="0.5" width="5" height="3" fill="#d8d8d8" stroke="#808080" stroke-width="1"/>
 <path d="M6.5 5.5H12.5L14.5 7.5V15.5H6.5Z" fill="url(#db)" stroke="#6070b8" stroke-width="1"/>
 <path d="M8 9.5H13M8 11.5H13M8 13.5H13" stroke="#88a8e0" stroke-width="1"/>
</svg>
<svg class="a" style="left:154px;top:137px" width="16" height="17" viewBox="0 0 16 17">
 <path d="M1.5 1.5C5 5 8 9 12.5 16M14.5 1.5C10 5 6 10 1 16" fill="none" stroke="#f00000" stroke-width="1.4"/>
 <path d="M12.5 3.5L14.5 1.5" stroke="#f00" stroke-width="1.2"/>
</svg>
<svg class="a" style="left:194px;top:137px" width="18" height="17" viewBox="0 0 18 17">
 <path d="M6.5 2.5H10L11 3.5H14.5L16.5 6.5L14 14.5H6.5Z" fill="url(#fy)" stroke="#e0a800" stroke-width="1" stroke-linejoin="round"/>
 <path d="M5.5 1.5H10.5L12.5 3.5V11.5H5.5Z" fill="url(#db)" stroke="#6070b8" stroke-width="1"/>
 <path d="M1.5 5.5H6.5L8.5 7.5V15.5H1.5Z" fill="url(#db)" stroke="#6070b8" stroke-width="1"/>
 <path d="M5 14C8 14 10 12.5 10.5 10H9L12 6.5L14.5 10H13C12 13 9 15 5 14Z" fill="#30b030" stroke="#108010" stroke-width="0.6"/>
</svg>
<svg class="a" style="left:226px;top:137px" width="18" height="18" viewBox="0 0 18 18">
 <path d="M1.5 3.5H5L6 4.5H10.5L12 2.5H15.5V8.5L13.5 15.5H1.5Z" fill="url(#fy)" stroke="#e0a800" stroke-width="1" stroke-linejoin="round"/>
 <path d="M4.5 1.5H10.5L12.5 3.5V8.5H4.5Z" fill="url(#db)" stroke="#6070b8" stroke-width="1"/>
 <path d="M6.5 9.5H11V7L16.5 11.5L11 16V13.5H6.5Z" fill="#30c030" stroke="#107010" stroke-width="0.8"/>
</svg>
<svg class="a" style="left:268px;top:138px" width="17" height="16" viewBox="0 0 17 16">
 <defs><linearGradient id="ga" x1="0" y1="0" x2="1" y2="1"><stop offset="0" stop-color="#30b030"/><stop offset="0.5" stop-color="#50d850"/><stop offset="1" stop-color="#189018"/></linearGradient></defs>
 <path d="M8.5 1L16 8.5H1Z" fill="url(#ga)" stroke="#0a3a0a" stroke-width="0.9" stroke-linejoin="round"/>
 <path d="M9.5 3.5L12.5 6.8" stroke="#d0ffd0" stroke-width="1.1" opacity="0.8"/>
 <path d="M8.5 5.5L14 11.5H3Z" fill="url(#ga)" stroke="#0a3a0a" stroke-width="0.9" stroke-linejoin="round"/>
 <path d="M9.5 8L11.5 10.2" stroke="#d0ffd0" stroke-width="1" opacity="0.7"/>
 <path d="M8.5 9.5L13 14.5H4Z" fill="url(#ga)" stroke="#0a3a0a" stroke-width="0.9" stroke-linejoin="round"/>
 <path d="M9.3 11.8L10.8 13.5" stroke="#d0ffd0" stroke-width="1" opacity="0.7"/>
</svg>
<svg class="a" style="left:300px;top:138px" width="17" height="16" viewBox="0 0 17 16">
 <path d="M1 7.5H16L8.5 15Z" fill="url(#ga)" stroke="#0a3a0a" stroke-width="0.9" stroke-linejoin="round"/>
 <path d="M9.5 12.5L12.5 9.5" stroke="#d0ffd0" stroke-width="1" opacity="0.7"/>
 <path d="M3 4.5H14L8.5 10Z" fill="url(#ga)" stroke="#0a3a0a" stroke-width="0.9" stroke-linejoin="round"/>
 <path d="M4 1.5H13L8.5 6Z" fill="url(#ga)" stroke="#0a3a0a" stroke-width="0.9" stroke-linejoin="round"/>
</svg>
<svg class="a" style="left:342px;top:137px" width="16" height="17" viewBox="0 0 16 17">
 <path d="M1.5 0.5H10L13.5 4V15.5H1.5Z" fill="url(#db)" stroke="#6070b8" stroke-width="1"/>
 <path d="M4.5 7C5 4.5 9 4 10.5 6L11.5 5V8.5H8L9 7.5C8 6 6 6.5 5.5 7.5Z" fill="#18a018"/>
 <path d="M10.5 10C10 12.5 6 13 4.5 11L3.5 12V8.5H7L6 9.5C7 11 9 10.5 9.5 9.5Z" fill="#18a018"/>
</svg>
<svg class="a" style="left:375px;top:137px" width="17" height="17" viewBox="0 0 17 17">
 <path d="M1.5 6.5C1.5 4.5 3 4 4.5 4H7L8 5H11V8H14.5L11.5 15.5H1.5Z" fill="url(#fy)" stroke="#e0a800" stroke-width="1" stroke-linejoin="round"/>
 <path d="M8 3C11 1 14 2 14.5 5.5L16 5L14 9L11 6.5L12.5 6C12.5 4 10.5 3 8 3Z" fill="#30b030" stroke="#108010" stroke-width="0.7"/>
</svg>
<svg class="a" style="left:407px;top:138px" width="18" height="16" viewBox="0 0 18 16">
 <path d="M1.5 7.5L4 6.5L7.5 10.5C10 6 13 3 16.5 1L17 1.8C13.5 5 10.5 9 8 14L6.5 14Z" fill="#f00000" stroke="#d00000" stroke-width="0.4"/>
</svg>
<svg class="a" style="left:448px;top:137px" width="18" height="18" viewBox="0 0 18 18">
 <defs><radialGradient id="gs" cx="0.4" cy="0.35" r="0.7"><stop offset="0" stop-color="#60d0ff"/><stop offset="0.6" stop-color="#2090e0"/><stop offset="1" stop-color="#1050b0"/></radialGradient>
 <radialGradient id="ln" cx="0.4" cy="0.4" r="0.6"><stop offset="0" stop-color="#fff"/><stop offset="1" stop-color="#80d8ff"/></radialGradient></defs>
 <circle cx="8.5" cy="8.5" r="7.5" fill="url(#gs)" stroke="#103080" stroke-width="0.8"/>
 <path d="M1.5 7C3 2 9 0.5 13 2.5L11 5.5L6.5 6L5 10L1.5 11Z" fill="#30b830"/>
 <path d="M2.5 11.5L6.5 12L8 16C5 15.5 3 13.5 2.5 11.5Z" fill="#30b830"/>
 <path d="M13.5 4L16 7L14 9Z" fill="#30b830"/>
 <path d="M12 12.5L16 16.5" stroke="#000" stroke-width="3.2" stroke-linecap="round"/>
 <path d="M12.3 12.8L15.7 16.2" stroke="#ff3030" stroke-width="1.6" stroke-linecap="round"/>
 <circle cx="10" cy="10" r="3.8" fill="url(#ln)" stroke="#000" stroke-width="1.1"/>
</svg>
<svg class="a" style="left:494px;top:145px" width="5" height="3"><path d="M0 0h5v1h-5zM1 1h3v1h-3zM2 2h1v1h-1z" fill="#000" shape-rendering="crispEdges"/></svg>
<!-- separators -->
<div class="a gl" style="left:76px;top:134px;width:1px;height:24px"></div>
<div class="a wl" style="left:77px;top:134px;width:1px;height:24px"></div>
<div class="a gl" style="left:182px;top:134px;width:1px;height:24px"></div>
<div class="a wl" style="left:183px;top:134px;width:1px;height:24px"></div>
<div class="a gl" style="left:255px;top:134px;width:1px;height:24px"></div>
<div class="a wl" style="left:256px;top:134px;width:1px;height:24px"></div>
<div class="a gl" style="left:329px;top:134px;width:1px;height:24px"></div>
<div class="a wl" style="left:330px;top:134px;width:1px;height:24px"></div>
<!-- band borders -->
<div class="a gl" style="left:435px;top:130px;width:1px;height:33px"></div>
<div class="a wl" style="left:436px;top:129px;width:1px;height:34px"></div>
<div class="a gl" style="left:505px;top:130px;width:1px;height:33px"></div>
<div class="a wl" style="left:506px;top:129px;width:1px;height:34px"></div>


<!-- left pane -->
<div class="a" style="left:4px;top:164px;width:200px;height:438px;border-top:1px solid #808080;border-left:1px solid #808080;border-right:1px solid #fff;border-bottom:1px solid #fff"></div>
<div class="a" style="left:5px;top:165px;width:198px;height:24px;border-top:1px solid #fff;border-left:1px solid #fff;border-right:1px solid #808080;border-bottom:1px solid #808080"></div>
<svg class="a" style="left:178px;top:173px" width="8" height="7" shape-rendering="crispEdges"><path d="M0 0h2v1h-2zM6 0h2v1h-2zM1 1h2v1h-2zM5 1h2v1h-2zM2 2h4v1h-4zM3 3h2v1h-2zM2 4h4v1h-4zM1 5h2v1h-2zM5 5h2v1h-2zM0 6h2v1h-2zM6 6h2v1h-2z" fill="#000"/></svg>
<div class="a" style="left:5px;top:189px;width:198px;height:412px;background:#fff;border-top:1px solid #808080;border-left:1px solid #808080;border-right:1px solid #fff;border-bottom:1px solid #fff;box-shadow:inset 1px 1px 0 #404040,inset -1px -1px 0 #d4d0c8"></div>


<!-- right pane list view -->
<div class="a" style="left:209px;top:164px;width:630px;height:438px;background:#fff;border-top:1px solid #808080;border-left:1px solid #808080;border-right:1px solid #fff;border-bottom:1px solid #fff;box-shadow:inset 1px 1px 0 #404040,inset -1px -1px 0 #d4d0c8"></div>


<!-- status bar -->
<!-- tree -->
<div class="a" style="left:11px;top:195px;width:9px;height:9px;border:1px solid #808080;background:#fff"></div>
<div class="a" style="left:13px;top:199px;width:5px;height:1px;background:#000"></div>
<div class="a" style="left:15px;top:197px;width:1px;height:5px;background:#000"></div>
<svg class="a" style="left:15px;top:199px" width="12" height="17"><path d="M6 0.5H11M0.5 6V16M0 16.5H11" stroke="#808080" stroke-width="1" stroke-dasharray="1 1" shape-rendering="crispEdges"/></svg>
<svg class="a" style="left:26px;top:191px" width="16" height="16" viewBox="0 0 16 16">
 <defs><linearGradient id="sc" x1="0" y1="0" x2="1" y2="1"><stop offset="0" stop-color="#80e0ff"/><stop offset="0.5" stop-color="#30b0ff"/><stop offset="1" stop-color="#1060e0"/></linearGradient></defs>
 <path d="M1 0.5H14.5V10H1Z" fill="#fbfbf4" stroke="#d8d8e8" stroke-width="1"/>
 <path d="M0.5 1V10.5H15" fill="none" stroke="#202040" stroke-width="1"/>
 <rect x="3" y="1.5" width="10.5" height="7.5" fill="#102080"/>
 <rect x="3.8" y="2.2" width="9" height="6" fill="url(#sc)"/>
 <path d="M0.5 11.5H15.5V15.5H1.5Z" fill="#e8e4f0" stroke="#202040" stroke-width="1"/>
 <path d="M3 13H13" stroke="#c0b8d0" stroke-width="1"/>
 <path d="M11 13.5H13" stroke="#d0c080" stroke-width="1"/>
</svg>
<svg class="a" style="left:26px;top:207px" width="17" height="16" viewBox="0 0 17 16">
 <path d="M10.5 1.5H16.5V7.5H10.5Z" fill="#f8f8f0" stroke="#202050" stroke-width="1"/>
 <rect x="12" y="3" width="3.5" height="3" fill="#30b0ff"/>
 <path d="M10 9H16.5" stroke="#a0a0b8" stroke-width="1.3"/>
 <path d="M1.5 5.5H10.5V12.5H1.5Z" fill="#f8f8f0" stroke="#202060" stroke-width="1"/>
 <rect x="3.5" y="7.5" width="5" height="3.5" fill="url(#sc)" stroke="#1030a0" stroke-width="0.6"/>
 <path d="M0.5 13H11.5V15.5H0.5Z" fill="#f0ecd8" stroke="#202050" stroke-width="1"/>
 <path d="M11.5 11.5L13.5 13.5H16.5" fill="none" stroke="#2050c0" stroke-width="1"/>
 <path d="M1.5 3L3.5 4.5L8 0.5" fill="none" stroke="#20b020" stroke-width="1.6"/>
 <path d="M1 4.5L1 6" stroke="#2060ff" stroke-width="1"/>
</svg>
<svg class="a" style="left:47px;top:193px" width="47" height="11" shape-rendering="crispEdges"><path d="M4 0h1v1h-1zM6 0h1v1h-1zM8 0h1v1h-1zM15 0h1v1h-1zM19 0h1v1h-1zM29 0h1v1h-1zM37 0h3v1h-3zM43 0h1v1h-1zM1 1h3v1h-3zM6 1h1v1h-1zM9 1h1v1h-1zM14 1h1v1h-1zM19 1h1v1h-1zM29 1h1v1h-1zM37 1h1v1h-1zM39 1h1v1h-1zM44 1h1v1h-1zM3 2h1v1h-1zM6 2h1v1h-1zM13 2h4v1h-4zM18 2h5v1h-5zM25 2h9v1h-9zM37 2h1v1h-1zM39 2h1v1h-1zM41 2h6v1h-6zM0 3h11v1h-11zM13 3h1v1h-1zM16 3h2v1h-2zM22 3h1v1h-1zM25 3h1v1h-1zM29 3h1v1h-1zM33 3h1v1h-1zM37 3h3v1h-3zM3 4h1v1h-1zM6 4h1v1h-1zM13 4h1v1h-1zM16 4h1v1h-1zM22 4h1v1h-1zM25 4h9v1h-9zM37 4h1v1h-1zM39 4h1v1h-1zM41 4h1v1h-1zM44 4h1v1h-1zM46 4h1v1h-1zM3 5h2v1h-2zM6 5h1v1h-1zM9 5h1v1h-1zM13 5h4v1h-4zM18 5h1v1h-1zM22 5h1v1h-1zM25 5h1v1h-1zM29 5h1v1h-1zM33 5h1v1h-1zM37 5h1v1h-1zM39 5h1v1h-1zM41 5h2v1h-2zM44 5h1v1h-1zM46 5h1v1h-1zM2 6h2v1h-2zM6 6h1v1h-1zM8 6h1v1h-1zM13 6h1v1h-1zM16 6h1v1h-1zM19 6h1v1h-1zM22 6h1v1h-1zM25 6h1v1h-1zM29 6h1v1h-1zM33 6h1v1h-1zM37 6h3v1h-3zM41 6h1v1h-1zM43 6h1v1h-1zM46 6h1v1h-1zM0 7h2v1h-2zM3 7h1v1h-1zM7 7h1v1h-1zM13 7h1v1h-1zM16 7h1v1h-1zM19 7h1v1h-1zM22 7h1v1h-1zM25 7h9v1h-9zM37 7h1v1h-1zM39 7h1v1h-1zM41 7h2v1h-2zM44 7h1v1h-1zM46 7h1v1h-1zM3 8h1v1h-1zM6 8h2v1h-2zM10 8h1v1h-1zM13 8h1v1h-1zM16 8h1v1h-1zM22 8h1v1h-1zM29 8h1v1h-1zM34 8h1v1h-1zM37 8h1v1h-1zM39 8h1v1h-1zM41 8h1v1h-1zM46 8h1v1h-1zM1 9h1v1h-1zM3 9h1v1h-1zM5 9h1v1h-1zM8 9h1v1h-1zM10 9h1v1h-1zM13 9h4v1h-4zM22 9h1v1h-1zM29 9h1v1h-1zM34 9h1v1h-1zM36 9h1v1h-1zM39 9h1v1h-1zM41 9h6v1h-6zM2 10h1v1h-1zM9 10h2v1h-2zM13 10h1v1h-1zM16 10h1v1h-1zM20 10h2v1h-2zM30 10h5v1h-5zM36 10h1v1h-1zM38 10h2v1h-2zM41 10h1v1h-1zM46 10h1v1h-1z" fill="#000"/></svg>
<svg class="a" style="left:48px;top:209px" width="69" height="11" shape-rendering="crispEdges"><path d="M2 0h1v1h-1zM17 0h1v1h-1zM27 0h1v1h-1zM36 0h1v1h-1zM40 0h1v1h-1zM42 0h1v1h-1zM50 0h1v1h-1zM60 0h1v1h-1zM0 1h7v1h-7zM11 1h4v1h-4zM17 1h1v1h-1zM27 1h1v1h-1zM36 1h1v1h-1zM40 1h1v1h-1zM43 1h1v1h-1zM51 1h1v1h-1zM60 1h1v1h-1zM63 1h4v1h-4zM0 2h1v1h-1zM6 2h1v1h-1zM17 2h1v1h-1zM27 2h1v1h-1zM35 2h1v1h-1zM40 2h4v1h-4zM46 2h11v1h-11zM60 2h1v1h-1zM63 2h1v1h-1zM66 2h1v1h-1zM0 3h1v1h-1zM6 3h1v1h-1zM16 3h5v1h-5zM27 3h1v1h-1zM35 3h1v1h-1zM38 3h3v1h-3zM51 3h1v1h-1zM58 3h6v1h-6zM66 3h1v1h-1zM0 4h7v1h-7zM10 4h6v1h-6zM17 4h1v1h-1zM20 4h1v1h-1zM27 4h5v1h-5zM34 4h3v1h-3zM40 4h5v1h-5zM51 4h1v1h-1zM60 4h1v1h-1zM63 4h1v1h-1zM66 4h1v1h-1zM0 5h1v1h-1zM6 5h1v1h-1zM12 5h1v1h-1zM17 5h1v1h-1zM20 5h1v1h-1zM27 5h1v1h-1zM36 5h1v1h-1zM38 5h3v1h-3zM51 5h1v1h-1zM59 5h3v1h-3zM63 5h1v1h-1zM66 5h1v1h-1zM0 6h7v1h-7zM12 6h1v1h-1zM17 6h1v1h-1zM20 6h1v1h-1zM27 6h1v1h-1zM35 6h1v1h-1zM40 6h1v1h-1zM43 6h1v1h-1zM47 6h9v1h-9zM59 6h2v1h-2zM62 6h2v1h-2zM66 6h1v1h-1zM0 7h1v1h-1zM6 7h1v1h-1zM11 7h1v1h-1zM14 7h1v1h-1zM17 7h1v1h-1zM20 7h1v1h-1zM27 7h1v1h-1zM34 7h4v1h-4zM40 7h1v1h-1zM42 7h1v1h-1zM51 7h1v1h-1zM58 7h1v1h-1zM60 7h1v1h-1zM63 7h1v1h-1zM66 7h1v1h-1zM0 8h1v1h-1zM6 8h1v1h-1zM10 8h5v1h-5zM16 8h1v1h-1zM20 8h1v1h-1zM27 8h1v1h-1zM38 8h1v1h-1zM41 8h1v1h-1zM44 8h1v1h-1zM51 8h1v1h-1zM58 8h1v1h-1zM60 8h1v1h-1zM63 8h1v1h-1zM66 8h1v1h-1zM0 9h7v1h-7zM14 9h1v1h-1zM16 9h1v1h-1zM20 9h1v1h-1zM27 9h1v1h-1zM36 9h2v1h-2zM40 9h1v1h-1zM42 9h1v1h-1zM44 9h1v1h-1zM51 9h1v1h-1zM60 9h1v1h-1zM62 9h1v1h-1zM66 9h1v1h-1zM68 9h1v1h-1zM0 10h1v1h-1zM6 10h1v1h-1zM15 10h1v1h-1zM18 10h2v1h-2zM22 10h11v1h-11zM34 10h2v1h-2zM38 10h2v1h-2zM43 10h2v1h-2zM46 10h11v1h-11zM60 10h2v1h-2zM66 10h3v1h-3z" fill="#000"/></svg>

<!-- list header -->
<div class="a" style="left:211px;top:166px;width:250px;height:16px;background:#d4d0c8;border-top:1px solid #fff;border-left:1px solid #fff;border-right:1px solid #404040;border-bottom:1px solid #404040;box-shadow:inset -1px -1px 0 #808080"></div>
<div class="a" style="left:461px;top:166px;width:200px;height:16px;background:#d4d0c8;border-top:1px solid #fff;border-left:1px solid #fff;border-right:1px solid #404040;border-bottom:1px solid #404040;box-shadow:inset -1px -1px 0 #808080"></div>
<div class="a" style="left:661px;top:166px;width:100px;height:16px;background:#d4d0c8;border-top:1px solid #fff;border-left:1px solid #fff;border-right:1px solid #404040;border-bottom:1px solid #404040;box-shadow:inset -1px -1px 0 #808080"></div>
<div class="a" style="left:761px;top:166px;width:76px;height:16px;background:#d4d0c8;border-top:1px solid #fff;border-left:1px solid #fff;border-bottom:1px solid #404040;box-shadow:inset 0 -1px 0 #808080"></div>
<svg class="a" style="left:217px;top:168px" width="23" height="11" shape-rendering="crispEdges"><path d="M3 0h1v1h-1zM15 0h2v1h-2zM18 0h1v1h-1zM3 1h7v1h-7zM12 1h3v1h-3zM18 1h1v1h-1zM3 2h1v1h-1zM8 2h1v1h-1zM14 2h1v1h-1zM17 2h6v1h-6zM2 3h1v1h-1zM4 3h1v1h-1zM7 3h1v1h-1zM12 3h5v1h-5zM19 3h1v1h-1zM22 3h1v1h-1zM1 4h1v1h-1zM5 4h2v1h-2zM14 4h1v1h-1zM19 4h1v1h-1zM5 5h1v1h-1zM13 5h3v1h-3zM17 5h1v1h-1zM19 5h1v1h-1zM21 5h1v1h-1zM3 6h7v1h-7zM13 6h2v1h-2zM17 6h1v1h-1zM19 6h1v1h-1zM21 6h1v1h-1zM0 7h4v1h-4zM9 7h1v1h-1zM12 7h1v1h-1zM14 7h1v1h-1zM16 7h1v1h-1zM19 7h1v1h-1zM22 7h1v1h-1zM3 8h1v1h-1zM9 8h1v1h-1zM14 8h2v1h-2zM19 8h1v1h-1zM22 8h1v1h-1zM3 9h1v1h-1zM9 9h1v1h-1zM14 9h1v1h-1zM19 9h1v1h-1zM3 10h7v1h-7zM14 10h1v1h-1zM18 10h2v1h-2z" fill="#000"/></svg>
<svg class="a" style="left:466px;top:168px" width="23" height="11" shape-rendering="crispEdges"><path d="M5 0h1v1h-1zM17 0h1v1h-1zM5 1h1v1h-1zM17 1h1v1h-1zM5 2h1v1h-1zM17 2h1v1h-1zM0 3h11v1h-11zM14 3h1v1h-1zM17 3h1v1h-1zM20 3h1v1h-1zM5 4h1v1h-1zM14 4h1v1h-1zM17 4h1v1h-1zM21 4h1v1h-1zM5 5h1v1h-1zM13 5h1v1h-1zM17 5h1v1h-1zM21 5h1v1h-1zM4 6h1v1h-1zM6 6h1v1h-1zM13 6h1v1h-1zM17 6h1v1h-1zM22 6h1v1h-1zM4 7h1v1h-1zM6 7h1v1h-1zM12 7h1v1h-1zM17 7h1v1h-1zM22 7h1v1h-1zM3 8h1v1h-1zM7 8h1v1h-1zM17 8h1v1h-1zM2 9h1v1h-1zM8 9h1v1h-1zM15 9h1v1h-1zM17 9h1v1h-1zM0 10h2v1h-2zM9 10h2v1h-2zM16 10h1v1h-1z" fill="#000"/></svg>
<svg class="a" style="left:497px;top:168px" width="23" height="11" shape-rendering="crispEdges"><path d="M5 0h1v1h-1zM15 0h1v1h-1zM19 0h1v1h-1zM1 1h10v1h-10zM12 1h11v1h-11zM1 2h1v1h-1zM10 2h1v1h-1zM15 2h1v1h-1zM19 2h1v1h-1zM0 3h1v1h-1zM3 3h5v1h-5zM9 3h1v1h-1zM6 4h1v1h-1zM13 4h8v1h-8zM5 5h1v1h-1zM16 5h1v1h-1zM20 5h1v1h-1zM0 6h11v1h-11zM16 6h1v1h-1zM20 6h1v1h-1zM5 7h1v1h-1zM16 7h1v1h-1zM20 7h1v1h-1zM5 8h1v1h-1zM16 8h1v1h-1zM18 8h3v1h-3zM5 9h1v1h-1zM16 9h1v1h-1zM3 10h3v1h-3zM16 10h1v1h-1z" fill="#000"/></svg>
<svg class="a" style="left:490px;top:166px" width="40" height="16" shape-rendering="crispEdges"><path d="M6 3h1v1h-1zM5 4h1v1h-1zM4 5h1v6h-1zM5 11h1v1h-1zM6 12h1v1h-1zM32 3h1v1h-1zM33 4h1v1h-1zM34 5h1v6h-1zM33 11h1v1h-1zM32 12h1v1h-1z" fill="#000"/></svg>
<svg class="a" style="left:667px;top:168px" width="47" height="11" shape-rendering="crispEdges"><path d="M3 0h1v1h-1zM6 0h1v1h-1zM19 0h1v1h-1zM37 0h1v1h-1zM40 0h1v1h-1zM43 0h4v1h-4zM3 1h1v1h-1zM6 1h5v1h-5zM12 1h5v1h-5zM19 1h1v1h-1zM26 1h7v1h-7zM36 1h6v1h-6zM43 1h1v1h-1zM46 1h1v1h-1zM2 2h1v1h-1zM4 2h2v1h-2zM7 2h1v1h-1zM9 2h1v1h-1zM16 2h1v1h-1zM18 2h5v1h-5zM26 2h1v1h-1zM32 2h1v1h-1zM37 2h1v1h-1zM40 2h1v1h-1zM43 2h1v1h-1zM46 2h1v1h-1zM2 3h1v1h-1zM4 3h1v1h-1zM8 3h1v1h-1zM16 3h2v1h-2zM21 3h1v1h-1zM26 3h1v1h-1zM32 3h1v1h-1zM37 3h4v1h-4zM43 3h4v1h-4zM1 4h2v1h-2zM4 4h1v1h-1zM6 4h2v1h-2zM9 4h1v1h-1zM13 4h4v1h-4zM18 4h1v1h-1zM21 4h1v1h-1zM26 4h1v1h-1zM32 4h1v1h-1zM37 4h1v1h-1zM40 4h1v1h-1zM43 4h1v1h-1zM46 4h1v1h-1zM0 5h1v1h-1zM2 5h1v1h-1zM4 5h2v1h-2zM8 5h1v1h-1zM10 5h1v1h-1zM13 5h1v1h-1zM18 5h1v1h-1zM21 5h1v1h-1zM26 5h7v1h-7zM37 5h4v1h-4zM43 5h1v1h-1zM46 5h1v1h-1zM2 6h1v1h-1zM4 6h1v1h-1zM7 6h1v1h-1zM9 6h1v1h-1zM13 6h1v1h-1zM18 6h1v1h-1zM21 6h1v1h-1zM26 6h1v1h-1zM32 6h1v1h-1zM37 6h1v1h-1zM40 6h1v1h-1zM43 6h4v1h-4zM2 7h1v1h-1zM4 7h1v1h-1zM6 7h1v1h-1zM8 7h1v1h-1zM13 7h1v1h-1zM19 7h2v1h-2zM26 7h1v1h-1zM32 7h1v1h-1zM36 7h6v1h-6zM43 7h1v1h-1zM46 7h1v1h-1zM2 8h1v1h-1zM4 8h1v1h-1zM7 8h1v1h-1zM10 8h1v1h-1zM13 8h1v1h-1zM15 8h1v1h-1zM19 8h2v1h-2zM26 8h1v1h-1zM32 8h1v1h-1zM43 8h1v1h-1zM46 8h1v1h-1zM2 9h1v1h-1zM8 9h2v1h-2zM13 9h2v1h-2zM18 9h1v1h-1zM21 9h1v1h-1zM26 9h7v1h-7zM37 9h1v1h-1zM40 9h1v1h-1zM43 9h1v1h-1zM46 9h1v1h-1zM2 10h1v1h-1zM5 10h3v1h-3zM13 10h1v1h-1zM16 10h2v1h-2zM22 10h1v1h-1zM26 10h1v1h-1zM32 10h1v1h-1zM36 10h1v1h-1zM41 10h2v1h-2zM45 10h2v1h-2z" fill="#000"/></svg>

<!-- status bar -->
<div class="a" style="left:4px;top:606px;width:835px;height:26px;border-top:1px solid #fff;border-left:1px solid #fff;border-right:1px solid #808080;border-bottom:1px solid #808080"></div>
<div class="a" style="left:374px;top:607px;width:336px;height:24px;border-top:1px solid #808080;border-left:1px solid #808080;border-right:1px solid #fff;border-bottom:1px solid #fff"></div>
<div class="a" style="left:710px;top:607px;width:128px;height:24px;border-top:1px solid #808080;border-left:1px solid #808080;border-right:1px solid #fff;border-bottom:1px solid #fff"></div>
<div class="a" style="left:6px;top:608px;width:367px;height:22px;background:#e6e3e8;border-top:1px solid #808080;border-left:1px solid #808080;border-right:1px solid #fff;border-bottom:1px solid #fff;box-shadow:inset 1px 1px 0 #404040,inset -1px -1px 0 #d4d0c8"></div>


<!-- pixel font texts -->
<svg class="a" style="left:15px;top:82px" width="26" height="10" shape-rendering="crispEdges"><path d="M2 0h3v1h-3zM1 1h1v1h-1zM5 1h1v1h-1zM1 2h1v1h-1zM5 2h1v1h-1zM4 3h1v1h-1zM3 4h1v1h-1zM3 5h1v1h-1zM3 7h1v1h-1zM8 0h3v1h-3zM7 1h1v1h-1zM11 1h1v1h-1zM7 2h1v1h-1zM11 2h1v1h-1zM10 3h1v1h-1zM9 4h1v1h-1zM9 5h1v1h-1zM9 7h1v1h-1zM13 0h5v1h-5zM15 1h1v1h-1zM15 2h1v1h-1zM15 3h1v1h-1zM15 4h1v1h-1zM15 5h1v1h-1zM15 6h1v1h-1zM13 7h5v1h-5zM19 0h4v1h-4zM20 1h1v1h-1zM23 1h1v1h-1zM20 2h1v1h-1zM23 2h1v1h-1zM20 3h3v1h-3zM20 4h1v1h-1zM20 5h1v1h-1zM20 6h1v1h-1zM19 7h3v1h-3z" fill="#000"/></svg>
<svg class="a" style="left:51px;top:82px" width="32" height="10" shape-rendering="crispEdges"><path d="M2 0h3v1h-3zM1 1h1v1h-1zM5 1h1v1h-1zM1 2h1v1h-1zM5 2h1v1h-1zM4 3h1v1h-1zM3 4h1v1h-1zM3 5h1v1h-1zM3 7h1v1h-1zM8 0h3v1h-3zM7 1h1v1h-1zM11 1h1v1h-1zM7 2h1v1h-1zM11 2h1v1h-1zM10 3h1v1h-1zM9 4h1v1h-1zM9 5h1v1h-1zM9 7h1v1h-1zM14 0h3v1h-3zM13 1h1v1h-1zM17 1h1v1h-1zM13 2h1v1h-1zM17 2h1v1h-1zM16 3h1v1h-1zM15 4h1v1h-1zM15 5h1v1h-1zM15 7h1v1h-1zM20 0h3v1h-3zM19 1h1v1h-1zM23 1h1v1h-1zM19 2h1v1h-1zM23 2h1v1h-1zM22 3h1v1h-1zM21 4h1v1h-1zM21 5h1v1h-1zM21 7h1v1h-1zM26 0h3v1h-3zM25 1h1v1h-1zM29 1h1v1h-1zM25 2h1v1h-1zM29 2h1v1h-1zM28 3h1v1h-1zM27 4h1v1h-1zM27 5h1v1h-1zM27 7h1v1h-1z" fill="#000"/></svg>
<svg class="a" style="left:101px;top:82px" width="26" height="10" shape-rendering="crispEdges"><path d="M3 1h3v1h-3zM2 2h1v1h-1zM6 2h1v1h-1zM2 3h1v1h-1zM6 3h1v1h-1zM5 4h1v1h-1zM4 5h1v1h-1zM4 6h1v1h-1zM4 8h1v1h-1zM9 1h3v1h-3zM8 2h1v1h-1zM12 2h1v1h-1zM8 3h1v1h-1zM12 3h1v1h-1zM11 4h1v1h-1zM10 5h1v1h-1zM10 6h1v1h-1zM10 8h1v1h-1zM15 1h3v1h-3zM14 2h1v1h-1zM18 2h1v1h-1zM14 3h1v1h-1zM18 3h1v1h-1zM17 4h1v1h-1zM16 5h1v1h-1zM16 6h1v1h-1zM16 8h1v1h-1zM21 1h3v1h-3zM20 2h1v1h-1zM24 2h1v1h-1zM20 3h1v1h-1zM24 3h1v1h-1zM23 4h1v1h-1zM22 5h1v1h-1zM22 6h1v1h-1zM22 8h1v1h-1z" fill="#fff"/><path d="M2 0h3v1h-3zM1 1h1v1h-1zM5 1h1v1h-1zM1 2h1v1h-1zM5 2h1v1h-1zM4 3h1v1h-1zM3 4h1v1h-1zM3 5h1v1h-1zM3 7h1v1h-1zM8 0h3v1h-3zM7 1h1v1h-1zM11 1h1v1h-1zM7 2h1v1h-1zM11 2h1v1h-1zM10 3h1v1h-1zM9 4h1v1h-1zM9 5h1v1h-1zM9 7h1v1h-1zM14 0h3v1h-3zM13 1h1v1h-1zM17 1h1v1h-1zM13 2h1v1h-1zM17 2h1v1h-1zM16 3h1v1h-1zM15 4h1v1h-1zM15 5h1v1h-1zM15 7h1v1h-1zM20 0h3v1h-3zM19 1h1v1h-1zM23 1h1v1h-1zM19 2h1v1h-1zM23 2h1v1h-1zM22 3h1v1h-1zM21 4h1v1h-1zM21 5h1v1h-1zM21 7h1v1h-1z" fill="#808080"/></svg>
<svg class="a" style="left:140px;top:82px" width="26" height="10" shape-rendering="crispEdges"><path d="M3 1h3v1h-3zM2 2h1v1h-1zM6 2h1v1h-1zM2 3h1v1h-1zM6 3h1v1h-1zM5 4h1v1h-1zM4 5h1v1h-1zM4 6h1v1h-1zM4 8h1v1h-1zM9 1h3v1h-3zM8 2h1v1h-1zM12 2h1v1h-1zM8 3h1v1h-1zM12 3h1v1h-1zM11 4h1v1h-1zM10 5h1v1h-1zM10 6h1v1h-1zM10 8h1v1h-1zM15 1h3v1h-3zM14 2h1v1h-1zM18 2h1v1h-1zM14 3h1v1h-1zM18 3h1v1h-1zM17 4h1v1h-1zM16 5h1v1h-1zM16 6h1v1h-1zM16 8h1v1h-1zM21 1h3v1h-3zM20 2h1v1h-1zM24 2h1v1h-1zM20 3h1v1h-1zM24 3h1v1h-1zM23 4h1v1h-1zM22 5h1v1h-1zM22 6h1v1h-1zM22 8h1v1h-1z" fill="#fff"/><path d="M2 0h3v1h-3zM1 1h1v1h-1zM5 1h1v1h-1zM1 2h1v1h-1zM5 2h1v1h-1zM4 3h1v1h-1zM3 4h1v1h-1zM3 5h1v1h-1zM3 7h1v1h-1zM8 0h3v1h-3zM7 1h1v1h-1zM11 1h1v1h-1zM7 2h1v1h-1zM11 2h1v1h-1zM10 3h1v1h-1zM9 4h1v1h-1zM9 5h1v1h-1zM9 7h1v1h-1zM14 0h3v1h-3zM13 1h1v1h-1zM17 1h1v1h-1zM13 2h1v1h-1zM17 2h1v1h-1zM16 3h1v1h-1zM15 4h1v1h-1zM15 5h1v1h-1zM15 7h1v1h-1zM20 0h3v1h-3zM19 1h1v1h-1zM23 1h1v1h-1zM19 2h1v1h-1zM23 2h1v1h-1zM22 3h1v1h-1zM21 4h1v1h-1zM21 5h1v1h-1zM21 7h1v1h-1z" fill="#808080"/></svg>
<svg class="a" style="left:182px;top:82px" width="20" height="10" shape-rendering="crispEdges"><path d="M3 1h3v1h-3zM2 2h1v1h-1zM6 2h1v1h-1zM2 3h1v1h-1zM6 3h1v1h-1zM5 4h1v1h-1zM4 5h1v1h-1zM4 6h1v1h-1zM4 8h1v1h-1zM9 1h3v1h-3zM8 2h1v1h-1zM12 2h1v1h-1zM8 3h1v1h-1zM12 3h1v1h-1zM11 4h1v1h-1zM10 5h1v1h-1zM10 6h1v1h-1zM10 8h1v1h-1zM15 1h3v1h-3zM14 2h1v1h-1zM18 2h1v1h-1zM14 3h1v1h-1zM18 3h1v1h-1zM17 4h1v1h-1zM16 5h1v1h-1zM16 6h1v1h-1zM16 8h1v1h-1z" fill="#fff"/><path d="M2 0h3v1h-3zM1 1h1v1h-1zM5 1h1v1h-1zM1 2h1v1h-1zM5 2h1v1h-1zM4 3h1v1h-1zM3 4h1v1h-1zM3 5h1v1h-1zM3 7h1v1h-1zM8 0h3v1h-3zM7 1h1v1h-1zM11 1h1v1h-1zM7 2h1v1h-1zM11 2h1v1h-1zM10 3h1v1h-1zM9 4h1v1h-1zM9 5h1v1h-1zM9 7h1v1h-1zM14 0h3v1h-3zM13 1h1v1h-1zM17 1h1v1h-1zM13 2h1v1h-1zM17 2h1v1h-1zM16 3h1v1h-1zM15 4h1v1h-1zM15 5h1v1h-1zM15 7h1v1h-1z" fill="#808080"/></svg>
<svg class="a" style="left:218px;top:82px" width="26" height="10" shape-rendering="crispEdges"><path d="M3 1h3v1h-3zM2 2h1v1h-1zM6 2h1v1h-1zM2 3h1v1h-1zM6 3h1v1h-1zM5 4h1v1h-1zM4 5h1v1h-1zM4 6h1v1h-1zM4 8h1v1h-1zM9 1h3v1h-3zM8 2h1v1h-1zM12 2h1v1h-1zM8 3h1v1h-1zM12 3h1v1h-1zM11 4h1v1h-1zM10 5h1v1h-1zM10 6h1v1h-1zM10 8h1v1h-1zM15 1h3v1h-3zM14 2h1v1h-1zM18 2h1v1h-1zM14 3h1v1h-1zM18 3h1v1h-1zM17 4h1v1h-1zM16 5h1v1h-1zM16 6h1v1h-1zM16 8h1v1h-1zM21 1h3v1h-3zM20 2h1v1h-1zM24 2h1v1h-1zM20 3h1v1h-1zM24 3h1v1h-1zM23 4h1v1h-1zM22 5h1v1h-1zM22 6h1v1h-1zM22 8h1v1h-1z" fill="#fff"/><path d="M2 0h3v1h-3zM1 1h1v1h-1zM5 1h1v1h-1zM1 2h1v1h-1zM5 2h1v1h-1zM4 3h1v1h-1zM3 4h1v1h-1zM3 5h1v1h-1zM3 7h1v1h-1zM8 0h3v1h-3zM7 1h1v1h-1zM11 1h1v1h-1zM7 2h1v1h-1zM11 2h1v1h-1zM10 3h1v1h-1zM9 4h1v1h-1zM9 5h1v1h-1zM9 7h1v1h-1zM14 0h3v1h-3zM13 1h1v1h-1zM17 1h1v1h-1zM13 2h1v1h-1zM17 2h1v1h-1zM16 3h1v1h-1zM15 4h1v1h-1zM15 5h1v1h-1zM15 7h1v1h-1zM20 0h3v1h-3zM19 1h1v1h-1zM23 1h1v1h-1zM19 2h1v1h-1zM23 2h1v1h-1zM22 3h1v1h-1zM21 4h1v1h-1zM21 5h1v1h-1zM21 7h1v1h-1z" fill="#808080"/></svg>
<svg class="a" style="left:257px;top:82px" width="26" height="10" shape-rendering="crispEdges"><path d="M3 1h3v1h-3zM2 2h1v1h-1zM6 2h1v1h-1zM2 3h1v1h-1zM6 3h1v1h-1zM5 4h1v1h-1zM4 5h1v1h-1zM4 6h1v1h-1zM4 8h1v1h-1zM9 1h3v1h-3zM8 2h1v1h-1zM12 2h1v1h-1zM8 3h1v1h-1zM12 3h1v1h-1zM11 4h1v1h-1zM10 5h1v1h-1zM10 6h1v1h-1zM10 8h1v1h-1zM15 1h3v1h-3zM14 2h1v1h-1zM18 2h1v1h-1zM14 3h1v1h-1zM18 3h1v1h-1zM17 4h1v1h-1zM16 5h1v1h-1zM16 6h1v1h-1zM16 8h1v1h-1zM21 1h3v1h-3zM20 2h1v1h-1zM24 2h1v1h-1zM20 3h1v1h-1zM24 3h1v1h-1zM23 4h1v1h-1zM22 5h1v1h-1zM22 6h1v1h-1zM22 8h1v1h-1z" fill="#fff"/><path d="M2 0h3v1h-3zM1 1h1v1h-1zM5 1h1v1h-1zM1 2h1v1h-1zM5 2h1v1h-1zM4 3h1v1h-1zM3 4h1v1h-1zM3 5h1v1h-1zM3 7h1v1h-1zM8 0h3v1h-3zM7 1h1v1h-1zM11 1h1v1h-1zM7 2h1v1h-1zM11 2h1v1h-1zM10 3h1v1h-1zM9 4h1v1h-1zM9 5h1v1h-1zM9 7h1v1h-1zM14 0h3v1h-3zM13 1h1v1h-1zM17 1h1v1h-1zM13 2h1v1h-1zM17 2h1v1h-1zM16 3h1v1h-1zM15 4h1v1h-1zM15 5h1v1h-1zM15 7h1v1h-1zM20 0h3v1h-3zM19 1h1v1h-1zM23 1h1v1h-1zM19 2h1v1h-1zM23 2h1v1h-1zM22 3h1v1h-1zM21 4h1v1h-1zM21 5h1v1h-1zM21 7h1v1h-1z" fill="#808080"/></svg>
<svg class="a" style="left:304px;top:82px" width="26" height="10" shape-rendering="crispEdges"><path d="M3 1h3v1h-3zM2 2h1v1h-1zM6 2h1v1h-1zM2 3h1v1h-1zM6 3h1v1h-1zM5 4h1v1h-1zM4 5h1v1h-1zM4 6h1v1h-1zM4 8h1v1h-1zM9 1h3v1h-3zM8 2h1v1h-1zM12 2h1v1h-1zM8 3h1v1h-1zM12 3h1v1h-1zM11 4h1v1h-1zM10 5h1v1h-1zM10 6h1v1h-1zM10 8h1v1h-1zM15 1h3v1h-3zM14 2h1v1h-1zM18 2h1v1h-1zM14 3h1v1h-1zM18 3h1v1h-1zM17 4h1v1h-1zM16 5h1v1h-1zM16 6h1v1h-1zM16 8h1v1h-1zM21 1h3v1h-3zM20 2h1v1h-1zM24 2h1v1h-1zM20 3h1v1h-1zM24 3h1v1h-1zM23 4h1v1h-1zM22 5h1v1h-1zM22 6h1v1h-1zM22 8h1v1h-1z" fill="#fff"/><path d="M2 0h3v1h-3zM1 1h1v1h-1zM5 1h1v1h-1zM1 2h1v1h-1zM5 2h1v1h-1zM4 3h1v1h-1zM3 4h1v1h-1zM3 5h1v1h-1zM3 7h1v1h-1zM8 0h3v1h-3zM7 1h1v1h-1zM11 1h1v1h-1zM7 2h1v1h-1zM11 2h1v1h-1zM10 3h1v1h-1zM9 4h1v1h-1zM9 5h1v1h-1zM9 7h1v1h-1zM14 0h3v1h-3zM13 1h1v1h-1zM17 1h1v1h-1zM13 2h1v1h-1zM17 2h1v1h-1zM16 3h1v1h-1zM15 4h1v1h-1zM15 5h1v1h-1zM15 7h1v1h-1zM20 0h3v1h-3zM19 1h1v1h-1zM23 1h1v1h-1zM19 2h1v1h-1zM23 2h1v1h-1zM22 3h1v1h-1zM21 4h1v1h-1zM21 5h1v1h-1zM21 7h1v1h-1z" fill="#808080"/></svg>
<svg class="a" style="left:343px;top:82px" width="26" height="10" shape-rendering="crispEdges"><path d="M3 1h3v1h-3zM2 2h1v1h-1zM6 2h1v1h-1zM2 3h1v1h-1zM6 3h1v1h-1zM5 4h1v1h-1zM4 5h1v1h-1zM4 6h1v1h-1zM4 8h1v1h-1zM9 1h3v1h-3zM8 2h1v1h-1zM12 2h1v1h-1zM8 3h1v1h-1zM12 3h1v1h-1zM11 4h1v1h-1zM10 5h1v1h-1zM10 6h1v1h-1zM10 8h1v1h-1zM15 1h3v1h-3zM14 2h1v1h-1zM18 2h1v1h-1zM14 3h1v1h-1zM18 3h1v1h-1zM17 4h1v1h-1zM16 5h1v1h-1zM16 6h1v1h-1zM16 8h1v1h-1zM21 1h3v1h-3zM20 2h1v1h-1zM24 2h1v1h-1zM20 3h1v1h-1zM24 3h1v1h-1zM23 4h1v1h-1zM22 5h1v1h-1zM22 6h1v1h-1zM22 8h1v1h-1z" fill="#fff"/><path d="M2 0h3v1h-3zM1 1h1v1h-1zM5 1h1v1h-1zM1 2h1v1h-1zM5 2h1v1h-1zM4 3h1v1h-1zM3 4h1v1h-1zM3 5h1v1h-1zM3 7h1v1h-1zM8 0h3v1h-3zM7 1h1v1h-1zM11 1h1v1h-1zM7 2h1v1h-1zM11 2h1v1h-1zM10 3h1v1h-1zM9 4h1v1h-1zM9 5h1v1h-1zM9 7h1v1h-1zM14 0h3v1h-3zM13 1h1v1h-1zM17 1h1v1h-1zM13 2h1v1h-1zM17 2h1v1h-1zM16 3h1v1h-1zM15 4h1v1h-1zM15 5h1v1h-1zM15 7h1v1h-1zM20 0h3v1h-3zM19 1h1v1h-1zM23 1h1v1h-1zM19 2h1v1h-1zM23 2h1v1h-1zM22 3h1v1h-1zM21 4h1v1h-1zM21 5h1v1h-1zM21 7h1v1h-1z" fill="#808080"/></svg>
<svg class="a" style="left:390px;top:82px" width="26" height="10" shape-rendering="crispEdges"><path d="M3 1h3v1h-3zM2 2h1v1h-1zM6 2h1v1h-1zM2 3h1v1h-1zM6 3h1v1h-1zM5 4h1v1h-1zM4 5h1v1h-1zM4 6h1v1h-1zM4 8h1v1h-1zM9 1h3v1h-3zM8 2h1v1h-1zM12 2h1v1h-1zM8 3h1v1h-1zM12 3h1v1h-1zM11 4h1v1h-1zM10 5h1v1h-1zM10 6h1v1h-1zM10 8h1v1h-1zM15 1h3v1h-3zM14 2h1v1h-1zM18 2h1v1h-1zM14 3h1v1h-1zM18 3h1v1h-1zM17 4h1v1h-1zM16 5h1v1h-1zM16 6h1v1h-1zM16 8h1v1h-1zM21 1h3v1h-3zM20 2h1v1h-1zM24 2h1v1h-1zM20 3h1v1h-1zM24 3h1v1h-1zM23 4h1v1h-1zM22 5h1v1h-1zM22 6h1v1h-1zM22 8h1v1h-1z" fill="#fff"/><path d="M2 0h3v1h-3zM1 1h1v1h-1zM5 1h1v1h-1zM1 2h1v1h-1zM5 2h1v1h-1zM4 3h1v1h-1zM3 4h1v1h-1zM3 5h1v1h-1zM3 7h1v1h-1zM8 0h3v1h-3zM7 1h1v1h-1zM11 1h1v1h-1zM7 2h1v1h-1zM11 2h1v1h-1zM10 3h1v1h-1zM9 4h1v1h-1zM9 5h1v1h-1zM9 7h1v1h-1zM14 0h3v1h-3zM13 1h1v1h-1zM17 1h1v1h-1zM13 2h1v1h-1zM17 2h1v1h-1zM16 3h1v1h-1zM15 4h1v1h-1zM15 5h1v1h-1zM15 7h1v1h-1zM20 0h3v1h-3zM19 1h1v1h-1zM23 1h1v1h-1zM19 2h1v1h-1zM23 2h1v1h-1zM22 3h1v1h-1zM21 4h1v1h-1zM21 5h1v1h-1zM21 7h1v1h-1z" fill="#808080"/></svg>
<svg class="a" style="left:429px;top:82px" width="26" height="10" shape-rendering="crispEdges"><path d="M3 1h3v1h-3zM2 2h1v1h-1zM6 2h1v1h-1zM2 3h1v1h-1zM6 3h1v1h-1zM5 4h1v1h-1zM4 5h1v1h-1zM4 6h1v1h-1zM4 8h1v1h-1zM9 1h3v1h-3zM8 2h1v1h-1zM12 2h1v1h-1zM8 3h1v1h-1zM12 3h1v1h-1zM11 4h1v1h-1zM10 5h1v1h-1zM10 6h1v1h-1zM10 8h1v1h-1zM15 1h3v1h-3zM14 2h1v1h-1zM18 2h1v1h-1zM14 3h1v1h-1zM18 3h1v1h-1zM17 4h1v1h-1zM16 5h1v1h-1zM16 6h1v1h-1zM16 8h1v1h-1zM21 1h3v1h-3zM20 2h1v1h-1zM24 2h1v1h-1zM20 3h1v1h-1zM24 3h1v1h-1zM23 4h1v1h-1zM22 5h1v1h-1zM22 6h1v1h-1zM22 8h1v1h-1z" fill="#fff"/><path d="M2 0h3v1h-3zM1 1h1v1h-1zM5 1h1v1h-1zM1 2h1v1h-1zM5 2h1v1h-1zM4 3h1v1h-1zM3 4h1v1h-1zM3 5h1v1h-1zM3 7h1v1h-1zM8 0h3v1h-3zM7 1h1v1h-1zM11 1h1v1h-1zM7 2h1v1h-1zM11 2h1v1h-1zM10 3h1v1h-1zM9 4h1v1h-1zM9 5h1v1h-1zM9 7h1v1h-1zM14 0h3v1h-3zM13 1h1v1h-1zM17 1h1v1h-1zM13 2h1v1h-1zM17 2h1v1h-1zM16 3h1v1h-1zM15 4h1v1h-1zM15 5h1v1h-1zM15 7h1v1h-1zM20 0h3v1h-3zM19 1h1v1h-1zM23 1h1v1h-1zM19 2h1v1h-1zM23 2h1v1h-1zM22 3h1v1h-1zM21 4h1v1h-1zM21 5h1v1h-1zM21 7h1v1h-1z" fill="#808080"/></svg>
<svg class="a" style="left:474px;top:82px" width="14" height="10" shape-rendering="crispEdges"><path d="M2 0h3v1h-3zM1 1h1v1h-1zM5 1h1v1h-1zM1 2h1v1h-1zM5 2h1v1h-1zM4 3h1v1h-1zM3 4h1v1h-1zM3 5h1v1h-1zM3 7h1v1h-1zM8 0h3v1h-3zM7 1h1v1h-1zM11 1h1v1h-1zM7 2h1v1h-1zM11 2h1v1h-1zM10 3h1v1h-1zM9 4h1v1h-1zM9 5h1v1h-1zM9 7h1v1h-1z" fill="#000"/></svg>
<svg class="a" style="left:11px;top:108px" width="32" height="10" shape-rendering="crispEdges"><path d="M2 0h3v1h-3zM1 1h1v1h-1zM5 1h1v1h-1zM1 2h1v1h-1zM5 2h1v1h-1zM4 3h1v1h-1zM3 4h1v1h-1zM3 5h1v1h-1zM3 7h1v1h-1zM8 0h3v1h-3zM7 1h1v1h-1zM11 1h1v1h-1zM7 2h1v1h-1zM11 2h1v1h-1zM10 3h1v1h-1zM9 4h1v1h-1zM9 5h1v1h-1zM9 7h1v1h-1zM13 0h5v1h-5zM15 1h1v1h-1zM15 2h1v1h-1zM15 3h1v1h-1zM15 4h1v1h-1zM15 5h1v1h-1zM15 6h1v1h-1zM13 7h5v1h-5zM19 0h4v1h-4zM20 1h1v1h-1zM23 1h1v1h-1zM20 2h1v1h-1zM23 2h1v1h-1zM20 3h3v1h-3zM20 4h1v1h-1zM20 5h1v1h-1zM20 6h1v1h-1zM19 7h3v1h-3zM27 2h1v1h-1zM27 7h1v1h-1z" fill="#000"/></svg>
<svg class="a" style="left:195px;top:108px" width="32" height="10" shape-rendering="crispEdges"><path d="M2 0h3v1h-3zM1 1h1v1h-1zM5 1h1v1h-1zM1 2h1v1h-1zM5 2h1v1h-1zM4 3h1v1h-1zM3 4h1v1h-1zM3 5h1v1h-1zM3 7h1v1h-1zM8 0h3v1h-3zM7 1h1v1h-1zM11 1h1v1h-1zM7 2h1v1h-1zM11 2h1v1h-1zM10 3h1v1h-1zM9 4h1v1h-1zM9 5h1v1h-1zM9 7h1v1h-1zM14 0h3v1h-3zM13 1h1v1h-1zM17 1h1v1h-1zM13 2h1v1h-1zM17 2h1v1h-1zM16 3h1v1h-1zM15 4h1v1h-1zM15 5h1v1h-1zM15 7h1v1h-1zM20 0h3v1h-3zM19 1h1v1h-1zM23 1h1v1h-1zM19 2h1v1h-1zM23 2h1v1h-1zM22 3h1v1h-1zM21 4h1v1h-1zM21 5h1v1h-1zM21 7h1v1h-1zM27 2h1v1h-1zM27 7h1v1h-1z" fill="#000"/></svg>
<svg class="a" style="left:438px;top:110px" width="14" height="10" shape-rendering="crispEdges"><path d="M2 0h3v1h-3zM1 1h1v1h-1zM5 1h1v1h-1zM1 2h1v1h-1zM5 2h1v1h-1zM4 3h1v1h-1zM3 4h1v1h-1zM3 5h1v1h-1zM3 7h1v1h-1zM8 0h3v1h-3zM7 1h1v1h-1zM11 1h1v1h-1zM7 2h1v1h-1zM11 2h1v1h-1zM10 3h1v1h-1zM9 4h1v1h-1zM9 5h1v1h-1zM9 7h1v1h-1z" fill="#000"/></svg>
<svg class="a" style="left:499px;top:108px" width="32" height="10" shape-rendering="crispEdges"><path d="M2 0h3v1h-3zM1 1h1v1h-1zM5 1h1v1h-1zM1 2h1v1h-1zM5 2h1v1h-1zM4 3h1v1h-1zM3 4h1v1h-1zM3 5h1v1h-1zM3 7h1v1h-1zM8 0h3v1h-3zM7 1h1v1h-1zM11 1h1v1h-1zM7 2h1v1h-1zM11 2h1v1h-1zM10 3h1v1h-1zM9 4h1v1h-1zM9 5h1v1h-1zM9 7h1v1h-1zM14 0h3v1h-3zM13 1h1v1h-1zM17 1h1v1h-1zM13 2h1v1h-1zM17 2h1v1h-1zM16 3h1v1h-1zM15 4h1v1h-1zM15 5h1v1h-1zM15 7h1v1h-1zM20 0h3v1h-3zM19 1h1v1h-1zM23 1h1v1h-1zM19 2h1v1h-1zM23 2h1v1h-1zM22 3h1v1h-1zM21 4h1v1h-1zM21 5h1v1h-1zM21 7h1v1h-1zM27 2h1v1h-1zM27 7h1v1h-1z" fill="#000"/></svg>
<svg class="a" style="left:561px;top:108px" width="14" height="10" shape-rendering="crispEdges"><path d="M2 0h3v1h-3zM1 1h1v1h-1zM5 1h1v1h-1zM1 2h1v1h-1zM5 2h1v1h-1zM2 3h3v1h-3zM1 4h1v1h-1zM5 4h1v1h-1zM1 5h1v1h-1zM5 5h1v1h-1zM1 6h1v1h-1zM5 6h1v1h-1zM2 7h3v1h-3zM8 0h3v1h-3zM7 1h1v1h-1zM11 1h1v1h-1zM7 2h1v1h-1zM11 2h1v1h-1zM7 3h1v1h-1zM11 3h1v1h-1zM7 4h1v1h-1zM11 4h1v1h-1zM7 5h1v1h-1zM11 5h1v1h-1zM7 6h1v1h-1zM11 6h1v1h-1zM8 7h3v1h-3z" fill="#000"/></svg>
<svg class="a" style="left:627px;top:108px" width="20" height="10" shape-rendering="crispEdges"><path d="M2 0h3v1h-3zM1 1h1v1h-1zM5 1h1v1h-1zM1 2h1v1h-1zM5 2h1v1h-1zM4 3h1v1h-1zM3 4h1v1h-1zM3 5h1v1h-1zM3 7h1v1h-1zM8 0h3v1h-3zM7 1h1v1h-1zM11 1h1v1h-1zM7 2h1v1h-1zM11 2h1v1h-1zM10 3h1v1h-1zM9 4h1v1h-1zM9 5h1v1h-1zM9 7h1v1h-1zM15 2h1v1h-1zM15 7h1v1h-1z" fill="#000"/></svg>
<svg class="a" style="left:788px;top:109px" width="26" height="10" shape-rendering="crispEdges"><path d="M2 0h3v1h-3zM1 1h1v1h-1zM5 1h1v1h-1zM1 2h1v1h-1zM5 2h1v1h-1zM4 3h1v1h-1zM3 4h1v1h-1zM3 5h1v1h-1zM3 7h1v1h-1zM8 0h3v1h-3zM7 1h1v1h-1zM11 1h1v1h-1zM7 2h1v1h-1zM11 2h1v1h-1zM10 3h1v1h-1zM9 4h1v1h-1zM9 5h1v1h-1zM9 7h1v1h-1zM14 0h3v1h-3zM13 1h1v1h-1zM17 1h1v1h-1zM13 2h1v1h-1zM17 2h1v1h-1zM16 3h1v1h-1zM15 4h1v1h-1zM15 5h1v1h-1zM15 7h1v1h-1zM20 0h3v1h-3zM19 1h1v1h-1zM23 1h1v1h-1zM19 2h1v1h-1zM23 2h1v1h-1zM22 3h1v1h-1zM21 4h1v1h-1zM21 5h1v1h-1zM21 7h1v1h-1z" fill="#000"/></svg>
<svg class="a" style="left:469px;top:142px" width="14" height="10" shape-rendering="crispEdges"><path d="M2 0h3v1h-3zM1 1h1v1h-1zM5 1h1v1h-1zM1 2h1v1h-1zM5 2h1v1h-1zM4 3h1v1h-1zM3 4h1v1h-1zM3 5h1v1h-1zM3 7h1v1h-1zM8 0h3v1h-3zM7 1h1v1h-1zM11 1h1v1h-1zM7 2h1v1h-1zM11 2h1v1h-1zM10 3h1v1h-1zM9 4h1v1h-1zM9 5h1v1h-1zM9 7h1v1h-1z" fill="#000"/></svg>
<svg class="a" style="left:555px;top:147px" width="98" height="10" shape-rendering="crispEdges"><path d="M2 0h3v1h-3zM1 1h1v1h-1zM5 1h1v1h-1zM1 2h1v1h-1zM5 2h1v1h-1zM4 3h1v1h-1zM3 4h1v1h-1zM3 5h1v1h-1zM3 7h1v1h-1zM8 0h3v1h-3zM7 1h1v1h-1zM11 1h1v1h-1zM7 2h1v1h-1zM11 2h1v1h-1zM10 3h1v1h-1zM9 4h1v1h-1zM9 5h1v1h-1zM9 7h1v1h-1zM14 0h3v1h-3zM13 1h1v1h-1zM17 1h1v1h-1zM13 2h1v1h-1zM17 2h1v1h-1zM16 3h1v1h-1zM15 4h1v1h-1zM15 5h1v1h-1zM15 7h1v1h-1zM20 0h3v1h-3zM19 1h1v1h-1zM23 1h1v1h-1zM19 2h1v1h-1zM23 2h1v1h-1zM22 3h1v1h-1zM21 4h1v1h-1zM21 5h1v1h-1zM21 7h1v1h-1zM27 2h1v1h-1zM27 7h1v1h-1zM32 0h3v1h-3zM31 1h1v1h-1zM35 1h1v1h-1zM31 2h1v1h-1zM35 2h1v1h-1zM34 3h1v1h-1zM33 4h1v1h-1zM33 5h1v1h-1zM33 7h1v1h-1zM38 0h3v1h-3zM37 1h1v1h-1zM41 1h1v1h-1zM37 2h1v1h-1zM41 2h1v1h-1zM40 3h1v1h-1zM39 4h1v1h-1zM39 5h1v1h-1zM39 7h1v1h-1zM44 0h3v1h-3zM43 1h1v1h-1zM47 1h1v1h-1zM43 2h1v1h-1zM47 2h1v1h-1zM46 3h1v1h-1zM45 4h1v1h-1zM45 5h1v1h-1zM45 7h1v1h-1zM50 0h3v1h-3zM49 1h1v1h-1zM53 1h1v1h-1zM49 2h1v1h-1zM53 2h1v1h-1zM52 3h1v1h-1zM51 4h1v1h-1zM51 5h1v1h-1zM51 7h1v1h-1zM55 0h2v1h-2zM59 0h2v1h-2zM56 1h1v1h-1zM59 1h1v1h-1zM56 2h1v1h-1zM59 2h1v1h-1zM56 3h1v1h-1zM58 3h1v1h-1zM56 4h1v1h-1zM58 4h1v1h-1zM57 5h2v1h-2zM57 6h1v1h-1zM57 7h1v1h-1zM62 0h3v1h-3zM61 1h1v1h-1zM65 1h1v1h-1zM61 2h1v1h-1zM65 2h1v1h-1zM64 3h1v1h-1zM63 4h1v1h-1zM62 5h1v1h-1zM61 6h1v1h-1zM61 7h5v1h-5zM68 7h1v1h-1zM74 0h3v1h-3zM73 1h1v1h-1zM77 1h1v1h-1zM73 2h1v1h-1zM77 2h1v1h-1zM76 3h1v1h-1zM75 4h1v1h-1zM74 5h1v1h-1zM73 6h1v1h-1zM73 7h5v1h-5zM80 0h3v1h-3zM79 1h1v1h-1zM83 1h1v1h-1zM79 2h1v1h-1zM83 2h1v1h-1zM82 3h1v1h-1zM81 4h1v1h-1zM81 5h1v1h-1zM81 7h1v1h-1zM86 0h3v1h-3zM85 1h1v1h-1zM89 1h1v1h-1zM85 2h1v1h-1zM89 2h1v1h-1zM88 3h1v1h-1zM87 4h1v1h-1zM87 5h1v1h-1zM87 7h1v1h-1zM92 0h3v1h-3zM91 1h1v1h-1zM95 1h1v1h-1zM91 2h1v1h-1zM95 2h1v1h-1zM94 3h1v1h-1zM93 4h1v1h-1zM93 5h1v1h-1zM93 7h1v1h-1z" fill="#000"/></svg>
<svg class="a" style="left:12px;top:173px" width="20" height="10" shape-rendering="crispEdges"><path d="M2 0h3v1h-3zM1 1h1v1h-1zM5 1h1v1h-1zM1 2h1v1h-1zM5 2h1v1h-1zM4 3h1v1h-1zM3 4h1v1h-1zM3 5h1v1h-1zM3 7h1v1h-1zM8 0h3v1h-3zM7 1h1v1h-1zM11 1h1v1h-1zM7 2h1v1h-1zM11 2h1v1h-1zM10 3h1v1h-1zM9 4h1v1h-1zM9 5h1v1h-1zM9 7h1v1h-1zM14 0h3v1h-3zM13 1h1v1h-1zM17 1h1v1h-1zM13 2h1v1h-1zM17 2h1v1h-1zM16 3h1v1h-1zM15 4h1v1h-1zM15 5h1v1h-1zM15 7h1v1h-1z" fill="#000"/></svg>
<svg class="a" style="left:383px;top:615px" width="32" height="10" shape-rendering="crispEdges"><path d="M2 0h3v1h-3zM1 1h1v1h-1zM5 1h1v1h-1zM1 2h1v1h-1zM5 2h1v1h-1zM4 3h1v1h-1zM3 4h1v1h-1zM3 5h1v1h-1zM3 7h1v1h-1zM8 0h3v1h-3zM7 1h1v1h-1zM11 1h1v1h-1zM7 2h1v1h-1zM11 2h1v1h-1zM10 3h1v1h-1zM9 4h1v1h-1zM9 5h1v1h-1zM9 7h1v1h-1zM14 0h3v1h-3zM13 1h1v1h-1zM17 1h1v1h-1zM13 2h1v1h-1zM17 2h1v1h-1zM16 3h1v1h-1zM15 4h1v1h-1zM15 5h1v1h-1zM15 7h1v1h-1zM20 0h3v1h-3zM19 1h1v1h-1zM23 1h1v1h-1zM19 2h1v1h-1zM23 2h1v1h-1zM22 3h1v1h-1zM21 4h1v1h-1zM21 5h1v1h-1zM21 7h1v1h-1zM26 0h3v1h-3zM25 1h1v1h-1zM29 1h1v1h-1zM25 2h1v1h-1zM29 2h1v1h-1zM28 3h1v1h-1zM27 4h1v1h-1zM27 5h1v1h-1zM27 7h1v1h-1z" fill="#000"/></svg>
<svg class="a" style="left:715px;top:615px" width="32" height="10" shape-rendering="crispEdges"><path d="M2 0h3v1h-3zM1 1h1v1h-1zM5 1h1v1h-1zM1 2h1v1h-1zM5 2h1v1h-1zM4 3h1v1h-1zM3 4h1v1h-1zM3 5h1v1h-1zM3 7h1v1h-1zM8 0h3v1h-3zM7 1h1v1h-1zM11 1h1v1h-1zM7 2h1v1h-1zM11 2h1v1h-1zM10 3h1v1h-1zM9 4h1v1h-1zM9 5h1v1h-1zM9 7h1v1h-1zM15 2h1v1h-1zM15 7h1v1h-1zM20 0h3v1h-3zM19 1h1v1h-1zM23 1h1v1h-1zM19 2h1v1h-1zM23 2h1v1h-1zM19 3h1v1h-1zM23 3h1v1h-1zM19 4h1v1h-1zM23 4h1v1h-1zM19 5h1v1h-1zM23 5h1v1h-1zM19 6h1v1h-1zM23 6h1v1h-1zM20 7h3v1h-3zM26 0h3v1h-3zM25 1h1v1h-1zM29 1h1v1h-1zM25 2h1v1h-1zM29 2h1v1h-1zM28 3h1v1h-1zM27 4h1v1h-1zM27 5h1v1h-1zM27 7h1v1h-1z" fill="#000"/></svg>
</body></html>
